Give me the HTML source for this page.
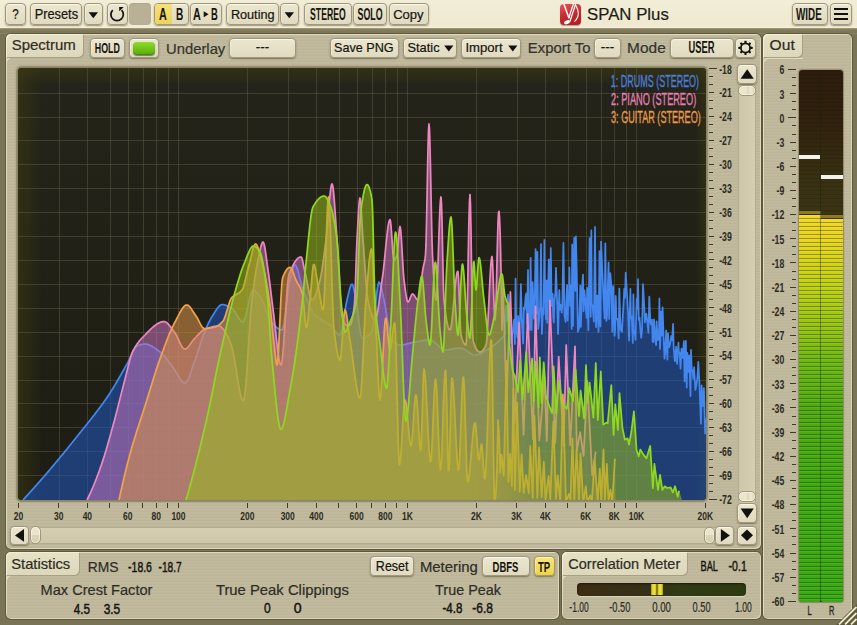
<!DOCTYPE html>
<html><head><meta charset="utf-8">
<style>
*{margin:0;padding:0;box-sizing:border-box}
html,body{width:857px;height:625px;overflow:hidden;background:#7a7456;font-family:"Liberation Sans",sans-serif;color:#1a1a14}
.a{position:absolute}
#top{left:0;top:0;width:857px;height:29px;background:linear-gradient(#f2edd6,#efe9d0 85%,#f6f1dc)}
#band{left:0;top:28px;width:857px;height:6px;background:linear-gradient(#a8a284,#857f5f 25%,#7b7555 70%,#8c8668)}
.b{position:absolute;border:1px solid #9f977b;border-radius:4px;background:linear-gradient(#ebe6ce,#e0dac0);box-shadow:0 1px 1.5px rgba(50,40,10,.45), inset 0 1px 0 rgba(255,255,250,.7), inset 1px 0 0 rgba(255,255,250,.35)}
.pb{position:absolute;border-radius:5px;background:#bfb89b}
.stripe{background-image:repeating-linear-gradient(0deg,rgba(255,255,245,.04) 0 1px,rgba(0,0,0,.015) 1px 2px,rgba(255,255,255,0) 2px 3px)}
.hl{position:absolute;border-radius:5px 5px 0 0;box-shadow:inset 1px 1px 0 #d9d2b6}
.tab{position:absolute;background:linear-gradient(#e6e0c5,#ddd7bb);border-radius:5px 0 5px 0;box-shadow:1px 1px 0 #a8a085, inset 1px 1px 0 #f3eed8}
.bd{position:absolute;background-color:#c4bc9f;border-radius:5px;box-shadow:inset 1px 1px 0 #e0dac0, inset -1px -1px 0 #ddd6bb, 0 -1px 0 #aaa286}
.tick{position:absolute;height:1px;background:#3e3b2e}
.vtick{position:absolute;width:1px;background:#3e3b2e}
.th{position:absolute;border-radius:5px;border:1px solid #9f977b;box-shadow:inset 0 0 0 1px rgba(255,255,245,.5)}
</style></head><body>
<div class="a" id="top"></div>
<div class="a" id="band"></div>
<div class="b" style="left:5px;top:3px;width:21px;height:22px"></div>
<div class="b" style="left:30px;top:3px;width:52px;height:22px"></div>
<div class="b" style="left:84px;top:3px;width:19px;height:22px"><svg width="17" height="20" style="position:absolute;left:0;top:0"><path d="M3.6 8.3h9.4l-4.7 5.9z" fill="#111"/></svg></div>
<div class="b" style="left:107px;top:3px;width:21px;height:22px"><svg width="19" height="20" style="position:absolute;left:0;top:0"><path d="M4.74 6.09 A6.2 6.2 0 1 0 13.6 6.2" fill="none" stroke="#111" stroke-width="1.7"/><path d="M11.1 3.1 L15.7 3.1 L11.3 7.3z" fill="#111"/></svg></div>
<div class="a" style="left:129px;top:3px;width:22px;height:22px;border-radius:4px;background:#b8b195;box-shadow:inset 0 1px 1px rgba(0,0,0,.06)"></div>
<div class="b" style="left:154px;top:3px;width:35px;height:22px;overflow:hidden"><div class="a" style="left:0;top:0;width:17px;height:20px;background:linear-gradient(#f5e07a,#edd45a)"></div></div>
<div class="b" style="left:190px;top:3px;width:32px;height:22px"></div>
<div class="b" style="left:226px;top:3px;width:53px;height:22px"></div>
<div class="b" style="left:280px;top:3px;width:19px;height:22px"><svg width="17" height="20" style="position:absolute;left:0;top:0"><path d="M3.6 8.3h9.4l-4.7 5.9z" fill="#111"/></svg></div>
<div class="b" style="left:304px;top:3px;width:48px;height:22px"></div>
<div class="b" style="left:353px;top:3px;width:34px;height:22px"></div>
<div class="b" style="left:389px;top:3px;width:40px;height:22px"></div>
<div class="a" style="left:560px;top:4px;width:21px;height:21px;border-radius:4px;background:linear-gradient(160deg,#e8545a,#c42a2e 50%,#b01c20);box-shadow:0 1px 1px rgba(0,0,0,.3)">
<svg width="21" height="21" style="position:absolute;left:0;top:0;overflow:hidden"><path d="M3.9 0 L8.9 14" stroke="#fff" stroke-width="1.5"/><path d="M13.3 0 L8.6 14.5" stroke="#fff" stroke-width="1.3"/><path d="M15.6 0 L9.9 17.5" stroke="#fff" stroke-width="1.2"/><ellipse cx="7" cy="18.2" rx="3.1" ry="1.9" transform="rotate(-22 7 18.2)" fill="#fff"/><path d="M15.5 0.8 C17.2 4 19.6 8.2 17.8 12.5 C17.2 14.5 15.8 16.4 14.4 17.6" stroke="#fff" stroke-width="1.1" fill="none"/></svg></div>
<div class="b" style="left:792px;top:3px;width:36px;height:22px"></div>
<div class="b" style="left:830px;top:3px;width:22px;height:22px"><div class="a" style="left:3px;top:4px;width:14px;height:2.2px;background:#111"></div><div class="a" style="left:3px;top:9px;width:14px;height:2.2px;background:#111"></div><div class="a" style="left:3px;top:14px;width:14px;height:2.2px;background:#111"></div></div>
<!-- spectrum panel -->
<div class="pb stripe" style="left:6px;top:34px;width:755px;height:515px;box-shadow:inset 1px 1px 0 #e0d9be, inset -1px -1px 0 #ddd6ba, 0 0 0 1px #5f5a3d"></div>
<div class="a" style="left:6px;top:57px;width:70px;height:14px;border-radius:5px 0 0 0;box-shadow:inset 1px 1px 0 #e4ddc2"></div>
<div class="tab" style="left:6px;top:34px;width:77px;height:23px"></div>
<div class="b" style="left:90px;top:38px;width:35px;height:20px"></div>
<div class="b" style="left:129px;top:38px;width:30px;height:20px"><div class="a" style="left:3px;top:2.5px;width:22px;height:13px;border-radius:4px;background:linear-gradient(#8edc2a,#6cc014 60%,#5aa80e);box-shadow:0 1px 1px rgba(0,0,0,.45), inset 0 -1px 1px rgba(0,0,0,.2)"></div></div>
<div class="b" style="left:229px;top:38px;width:67px;height:20px"></div>
<div class="b" style="left:330px;top:38px;width:69px;height:20px"></div>
<div class="b" style="left:403px;top:38px;width:54px;height:20px"><svg width="10" height="8" style="position:absolute;left:40px;top:6px"><path d="M0.2 0.5h9.2l-4.6 6z" fill="#111"/></svg></div>
<div class="b" style="left:461px;top:38px;width:60px;height:20px"><svg width="10" height="8" style="position:absolute;left:46px;top:6px"><path d="M0.2 0.5h9.2l-4.6 6z" fill="#111"/></svg></div>
<div class="b" style="left:594px;top:38px;width:27px;height:20px"></div>
<div class="b" style="left:670px;top:38px;width:64px;height:20px"></div>
<div class="b" style="left:735px;top:38px;width:21px;height:20px"><svg width="19" height="18" style="position:absolute;left:0;top:0"><g transform="translate(9.5 8.9)" fill="#111"><circle r="4.6" fill="none" stroke="#111" stroke-width="1.7"/><rect x="-1.05" y="-7.1" width="2.1" height="2.8" rx=".5" transform="rotate(0)"/><rect x="-1.05" y="-7.1" width="2.1" height="2.8" rx=".5" transform="rotate(45)"/><rect x="-1.05" y="-7.1" width="2.1" height="2.8" rx=".5" transform="rotate(90)"/><rect x="-1.05" y="-7.1" width="2.1" height="2.8" rx=".5" transform="rotate(135)"/><rect x="-1.05" y="-7.1" width="2.1" height="2.8" rx=".5" transform="rotate(180)"/><rect x="-1.05" y="-7.1" width="2.1" height="2.8" rx=".5" transform="rotate(225)"/><rect x="-1.05" y="-7.1" width="2.1" height="2.8" rx=".5" transform="rotate(270)"/><rect x="-1.05" y="-7.1" width="2.1" height="2.8" rx=".5" transform="rotate(315)"/></g></svg></div>

<!-- plot -->
<div class="a" style="left:17px;top:67px;width:690px;height:434px;border-radius:5px;background:#8a8466;box-shadow:0 0 1.5px 0.5px rgba(90,84,58,.5)"></div>
<div class="a" style="left:18px;top:68px;width:688px;height:432px;border-radius:4px;overflow:hidden;background:#2a281b">
<svg width="688" height="432" style="position:absolute;left:0;top:0">
<defs><linearGradient id="bg" x1="0" y1="0" x2="0" y2="1"><stop offset="0" stop-color="#25241a"/><stop offset="1" stop-color="#1e1d13"/></linearGradient><linearGradient id="bgx" x1="0" y1="0" x2="1" y2="0"><stop offset="0" stop-color="#3c3e12" stop-opacity=".5"/><stop offset=".035" stop-color="#3c3e12" stop-opacity="0"/></linearGradient></defs>
<rect width="688" height="432" fill="url(#bg)"/>
<rect width="688" height="432" fill="url(#bgx)"/>
<defs><linearGradient id="bgr" x1="0" y1="0" x2="1" y2="0"><stop offset=".985" stop-color="#3c3e12" stop-opacity="0"/><stop offset="1" stop-color="#3c3e12" stop-opacity=".45"/></linearGradient></defs><rect width="688" height="432" fill="url(#bgr)"/>
<defs><linearGradient id="bgy" x1="0" y1="0" x2="0" y2="1"><stop offset="0" stop-color="#3c3a12" stop-opacity=".6"/><stop offset=".04" stop-color="#3c3a12" stop-opacity="0"/></linearGradient></defs><rect width="688" height="432" fill="url(#bgy)"/>
<path d="M41.5 0V432 M69.5 0V432 M92.5 0V432 M110.5 0V432 M125.5 0V432 M138.5 0V432 M150.5 0V432 M160.5 0V432 M229.5 0V432 M270.5 0V432 M298.5 0V432 M321.5 0V432 M339.5 0V432 M354.5 0V432 M367.5 0V432 M379.5 0V432 M389.5 0V432 M458.5 0V432 M499.5 0V432 M527.5 0V432 M550.5 0V432 M568.5 0V432 M583.5 0V432 M596.5 0V432 M608.5 0V432 M618.5 0V432 M0 25.5H688 M0 49.5H688 M0 72.5H688 M0 96.5H688 M0 120.5H688 M0 144.5H688 M0 168.5H688 M0 192.5H688 M0 216.5H688 M0 240.5H688 M0 264.5H688 M0 288.5H688 M0 312.5H688 M0 335.5H688 M0 359.5H688 M0 383.5H688 M0 407.5H688" stroke="#5e5a45" stroke-width="1" fill="none" opacity=".5"/>
<defs><linearGradient id="pg" gradientUnits="userSpaceOnUse" x1="472" y1="0" x2="517" y2="0"><stop offset="0" stop-color="rgb(195,114,187)" stop-opacity=".55"/><stop offset="1" stop-color="rgb(195,114,187)" stop-opacity=".22"/></linearGradient><linearGradient id="og" gradientUnits="userSpaceOnUse" x1="452" y1="0" x2="512" y2="0"><stop offset="0" stop-color="rgb(220,148,74)" stop-opacity=".55"/><stop offset="1" stop-color="rgb(220,148,74)" stop-opacity=".28"/></linearGradient></defs><path d="M5.0 434.0 L5.0 432.0 L6.0 430.9 L7.0 429.8 L8.0 428.7 L9.0 427.6 L10.0 426.5 L11.0 425.4 L12.0 424.3 L13.0 423.2 L14.0 422.1 L15.0 421.0 L16.0 419.9 L17.0 418.7 L18.0 417.6 L19.0 416.5 L20.0 415.4 L21.0 414.2 L22.0 413.1 L23.0 411.9 L24.0 410.8 L25.0 409.6 L26.0 408.5 L27.0 407.3 L28.0 406.2 L29.0 405.0 L30.0 403.8 L31.0 402.7 L32.0 401.5 L33.0 400.3 L34.0 399.1 L35.0 397.9 L36.0 396.7 L37.0 395.5 L38.0 394.3 L39.0 393.1 L40.0 391.9 L41.0 390.7 L42.0 389.5 L43.0 388.3 L44.0 387.1 L45.0 385.9 L46.0 384.7 L47.0 383.4 L48.0 382.2 L49.0 381.0 L50.0 379.7 L51.0 378.5 L52.0 377.3 L53.0 376.0 L54.0 374.8 L55.0 373.5 L56.0 372.3 L57.0 371.0 L58.0 369.8 L59.0 368.5 L60.0 367.3 L61.0 366.0 L62.0 364.7 L63.0 363.5 L64.0 362.2 L65.0 361.0 L66.0 359.7 L67.0 358.5 L68.0 357.2 L69.0 356.0 L70.0 354.7 L71.0 353.5 L72.0 352.2 L73.0 351.0 L74.0 349.7 L75.0 348.4 L76.0 347.2 L77.0 345.9 L78.0 344.6 L79.0 343.3 L80.0 342.0 L81.0 340.6 L82.0 339.3 L83.0 337.9 L84.0 336.6 L85.0 335.2 L86.0 333.8 L87.0 332.4 L88.0 330.9 L89.0 329.5 L90.0 328.0 L91.0 326.5 L92.0 325.0 L93.0 323.4 L94.0 321.8 L95.0 320.2 L96.0 318.5 L97.0 316.9 L98.0 315.2 L99.0 313.5 L100.0 311.8 L101.0 310.0 L102.0 308.3 L103.0 306.5 L104.0 304.8 L105.0 303.0 L106.0 301.3 L107.0 299.5 L108.0 297.7 L109.0 296.0 L110.0 294.1 L111.0 292.0 L112.0 289.8 L113.0 287.6 L114.0 285.4 L115.0 283.3 L116.0 281.4 L117.0 279.9 L118.0 278.7 L119.0 278.0 L120.0 277.6 L121.0 277.2 L122.0 276.9 L123.0 276.6 L124.0 276.3 L125.0 276.2 L126.0 276.0 L127.0 276.0 L128.0 276.1 L129.0 276.2 L130.0 276.5 L131.0 276.8 L132.0 277.2 L133.0 277.7 L134.0 278.3 L135.0 278.9 L136.0 279.6 L137.0 280.3 L138.0 281.0 L139.0 281.7 L140.0 282.5 L141.0 283.3 L142.0 284.0 L143.0 284.8 L144.0 285.7 L145.0 286.7 L146.0 287.9 L147.0 289.0 L148.0 290.3 L149.0 291.5 L150.0 292.8 L151.0 294.2 L152.0 295.5 L153.0 296.7 L154.0 298.0 L155.0 299.3 L156.0 300.8 L157.0 302.5 L158.0 304.2 L159.0 305.9 L160.0 307.7 L161.0 309.3 L162.0 310.8 L163.0 312.2 L164.0 313.4 L165.0 314.2 L166.0 314.8 L167.0 315.0 L168.0 314.6 L169.0 313.4 L170.0 311.6 L171.0 309.4 L172.0 306.7 L173.0 303.8 L174.0 300.7 L175.0 297.7 L176.0 294.7 L177.0 292.0 L178.0 289.3 L179.0 286.5 L180.0 283.4 L181.0 280.4 L182.0 277.2 L183.0 274.1 L184.0 271.1 L185.0 268.2 L186.0 265.5 L187.0 263.0 L188.0 260.7 L189.0 258.4 L190.0 256.2 L191.0 254.1 L192.0 252.1 L193.0 250.3 L194.0 248.6 L195.0 247.0 L196.0 245.5 L197.0 243.9 L198.0 242.3 L199.0 240.8 L200.0 239.5 L201.0 238.3 L202.0 237.4 L203.0 236.8 L204.0 236.6 L205.0 236.7 L206.0 236.8 L207.0 237.1 L208.0 237.4 L209.0 237.8 L210.0 238.2 L211.0 238.7 L212.0 239.2 L213.0 239.7 L214.0 240.3 L215.0 241.3 L216.0 242.5 L217.0 244.0 L218.0 245.7 L219.0 247.4 L220.0 249.0 L221.0 250.6 L222.0 252.0 L223.0 253.0 L224.0 253.7 L225.0 254.0 L226.0 253.1 L227.0 250.7 L228.0 247.1 L229.0 242.7 L230.0 238.0 L231.0 233.3 L232.0 228.9 L233.0 225.3 L234.0 222.9 L235.0 222.0 L236.0 222.2 L237.0 222.7 L238.0 223.6 L239.0 224.6 L240.0 225.9 L241.0 227.3 L242.0 228.9 L243.0 230.4 L244.0 232.0 L245.0 233.9 L246.0 236.4 L247.0 239.2 L248.0 242.3 L249.0 245.2 L250.0 248.0 L251.0 250.3 L252.0 252.0 L253.0 253.3 L254.0 254.5 L255.0 255.7 L256.0 256.9 L257.0 258.0 L258.0 258.9 L259.0 259.8 L260.0 260.6 L261.0 261.2 L262.0 261.6 L263.0 261.9 L264.0 262.0 L265.0 260.3 L266.0 255.7 L267.0 249.0 L268.0 240.9 L269.0 232.4 L270.0 224.3 L271.0 217.2 L272.0 212.0 L273.0 207.9 L274.0 203.9 L275.0 200.4 L276.0 197.9 L277.0 197.0 L278.0 197.8 L279.0 200.0 L280.0 203.1 L281.0 207.0 L282.0 211.1 L283.0 215.2 L284.0 219.0 L285.0 222.0 L286.0 224.5 L287.0 227.1 L288.0 229.6 L289.0 232.1 L290.0 234.5 L291.0 236.8 L292.0 238.9 L293.0 240.9 L294.0 242.8 L295.0 244.4 L296.0 245.8 L297.0 247.0 L298.0 248.0 L299.0 248.8 L300.0 249.6 L301.0 250.3 L302.0 251.0 L303.0 251.6 L304.0 252.1 L305.0 252.7 L306.0 253.2 L307.0 253.7 L308.0 254.3 L309.0 254.9 L310.0 255.5 L311.0 256.2 L312.0 257.0 L313.0 257.9 L314.0 259.1 L315.0 260.4 L316.0 261.7 L317.0 263.0 L318.0 264.3 L319.0 265.4 L320.0 266.2 L321.0 266.8 L322.0 267.0 L323.0 265.5 L324.0 261.6 L325.0 256.1 L326.0 249.6 L327.0 242.9 L328.0 236.8 L329.0 232.0 L330.0 227.9 L331.0 223.6 L332.0 219.8 L333.0 217.0 L334.0 216.0 L335.0 217.6 L336.0 221.6 L337.0 226.8 L338.0 232.0 L339.0 238.2 L340.0 246.1 L341.0 254.6 L342.0 262.3 L343.0 267.9 L344.0 270.0 L345.0 269.9 L346.0 269.7 L347.0 269.4 L348.0 269.0 L349.0 268.5 L350.0 267.8 L351.0 267.0 L352.0 266.1 L353.0 265.1 L354.0 264.0 L355.0 260.4 L356.0 252.9 L357.0 243.2 L358.0 232.8 L359.0 223.4 L360.0 216.6 L361.0 214.0 L362.0 215.2 L363.0 218.4 L364.0 222.7 L365.0 227.5 L366.0 232.0 L367.0 236.8 L368.0 242.5 L369.0 248.7 L370.0 255.0 L371.0 260.9 L372.0 266.1 L373.0 269.9 L374.0 272.0 L375.0 273.1 L376.0 274.0 L377.0 274.9 L378.0 275.6 L379.0 276.2 L380.0 276.6 L381.0 276.9 L382.0 277.0 L383.0 277.0 L384.0 276.9 L385.0 276.8 L386.0 276.6 L387.0 276.4 L388.0 276.2 L389.0 275.9 L390.0 275.7 L391.0 275.4 L392.0 275.1 L393.0 274.9 L394.0 274.6 L395.0 274.4 L396.0 274.2 L397.0 274.0 L398.0 273.8 L399.0 273.7 L400.0 273.5 L401.0 273.3 L402.0 273.1 L403.0 273.0 L404.0 272.8 L405.0 272.6 L406.0 272.5 L407.0 272.3 L408.0 272.2 L409.0 272.1 L410.0 272.1 L411.0 272.0 L412.0 272.0 L413.0 272.1 L414.0 272.5 L415.0 273.0 L416.0 273.8 L417.0 274.6 L418.0 275.5 L419.0 276.5 L420.0 277.5 L421.0 278.5 L422.0 279.4 L423.0 280.2 L424.0 281.0 L425.0 281.5 L426.0 281.9 L427.0 282.0 L428.0 282.0 L429.0 281.9 L430.0 281.8 L431.0 281.6 L432.0 281.5 L433.0 281.3 L434.0 281.1 L435.0 280.9 L436.0 280.7 L437.0 280.5 L438.0 280.4 L439.0 280.2 L440.0 280.1 L441.0 280.0 L442.0 280.0 L443.0 280.1 L444.0 280.3 L445.0 280.7 L446.0 281.2 L447.0 281.8 L448.0 282.5 L449.0 283.2 L450.0 283.8 L451.0 284.5 L452.0 285.2 L453.0 285.8 L454.0 286.3 L455.0 286.7 L456.0 286.9 L457.0 287.0 L458.0 286.9 L459.0 286.8 L460.0 286.6 L461.0 286.2 L462.0 285.9 L463.0 285.4 L464.0 284.9 L465.0 284.3 L466.0 283.8 L467.0 283.1 L468.0 282.5 L469.0 281.9 L470.0 281.2 L471.0 280.6 L472.0 280.0 L473.0 279.4 L474.0 278.7 L475.0 278.0 L476.0 277.3 L477.0 276.5 L478.0 275.7 L479.0 274.8 L480.0 273.9 L481.0 273.0 L482.0 272.0 L483.0 271.0 L484.0 269.9 L485.0 268.7 L486.0 267.5 L487.0 266.2 L488.0 237.5 L488.7 253.0 L490.0 226.7 L490.8 257.4 L492.0 236.2 L493.1 275.4 L493.8 268.5 L495.0 262.6 L496.1 251.6 L496.9 276.0 L497.6 210.5 L498.3 262.9 L499.5 269.6 L500.1 248.0 L501.3 273.2 L502.4 237.3 L502.9 216.2 L503.8 252.3 L505.2 275.6 L505.8 239.7 L506.6 241.0 L507.6 228.2 L508.3 225.3 L509.0 255.5 L510.0 201.9 L510.5 238.9 L511.4 252.8 L512.0 261.9 L512.6 189.9 L513.6 261.9 L514.6 214.1 L515.1 228.4 L515.9 250.7 L516.5 247.2 L517.6 181.2 L518.9 245.7 L519.4 183.9 L520.2 261.0 L521.4 249.6 L522.1 238.4 L523.0 176.1 L523.9 265.9 L525.0 240.1 L525.6 246.5 L526.4 172.0 L527.0 220.5 L528.0 250.9 L528.6 212.3 L529.2 254.8 L529.9 231.9 L530.8 191.4 L532.1 255.1 L532.8 180.0 L533.5 229.4 L534.0 238.2 L534.6 225.7 L535.2 248.0 L535.8 254.6 L536.3 232.6 L537.3 225.3 L538.0 199.9 L539.3 238.6 L540.1 266.0 L541.3 222.2 L541.8 241.8 L543.0 237.0 L543.7 244.7 L544.3 237.0 L545.4 174.9 L546.5 247.6 L547.6 253.9 L548.6 226.2 L549.1 217.1 L549.7 252.5 L550.4 225.2 L551.0 226.8 L551.4 199.5 L552.1 237.8 L552.8 217.6 L553.7 261.0 L554.2 176.5 L555.0 257.8 L556.2 169.9 L557.4 222.8 L557.9 168.4 L558.9 210.3 L559.9 263.8 L561.2 259.4 L562.3 217.6 L562.9 258.8 L564.0 220.7 L565.0 206.7 L565.6 243.3 L566.4 222.4 L567.7 237.3 L568.6 249.8 L569.2 219.8 L570.4 262.3 L571.6 170.1 L572.7 248.8 L573.3 162.3 L573.8 236.6 L574.5 237.2 L575.9 253.7 L577.0 158.9 L578.0 259.1 L579.2 227.6 L580.5 264.0 L581.5 183.1 L582.4 258.4 L583.1 173.6 L584.4 204.7 L585.5 228.5 L586.6 250.5 L587.3 175.3 L588.4 252.9 L589.0 248.7 L589.9 215.7 L590.6 194.5 L591.2 250.9 L592.3 205.1 L593.5 219.3 L594.3 263.9 L595.3 218.2 L596.5 267.8 L597.1 262.1 L597.8 228.0 L598.3 251.4 L599.6 250.9 L600.7 270.5 L601.3 220.5 L602.6 261.8 L603.9 263.9 L605.1 243.5 L606.3 220.9 L607.0 229.8 L607.7 204.6 L609.1 227.8 L610.0 243.8 L611.1 272.6 L612.4 220.8 L612.9 250.0 L613.7 248.3 L614.8 275.0 L615.4 226.3 L616.0 264.1 L616.9 265.3 L617.5 272.0 L618.7 230.6 L619.4 241.1 L620.0 211.2 L620.8 251.9 L621.6 249.8 L622.3 260.8 L623.2 269.8 L624.0 262.1 L625.0 216.1 L626.2 237.4 L627.0 254.3 L628.3 245.6 L629.6 255.8 L630.4 264.9 L631.3 228.6 L632.4 254.4 L633.1 256.7 L634.0 251.6 L634.6 273.8 L635.2 274.0 L636.0 251.4 L637.3 273.1 L638.1 277.1 L638.6 253.4 L639.7 272.1 L640.9 271.0 L641.4 230.5 L642.0 280.9 L643.2 243.6 L643.7 267.7 L644.6 239.3 L645.6 269.2 L646.5 290.6 L647.2 283.6 L648.2 262.5 L649.4 291.6 L650.0 265.3 L650.5 275.0 L651.2 279.2 L652.2 275.3 L653.2 268.2 L654.1 272.1 L655.1 255.8 L655.7 280.8 L656.8 293.2 L658.1 278.6 L658.7 293.9 L659.2 295.9 L660.4 274.7 L660.9 284.8 L661.7 284.4 L662.5 300.6 L663.5 280.6 L664.7 290.0 L665.9 273.1 L666.6 313.4 L667.9 272.9 L668.7 319.5 L669.3 284.9 L670.4 303.9 L671.3 287.4 L672.5 328.0 L673.0 281.8 L673.7 301.1 L674.8 304.2 L675.3 310.9 L676.1 299.2 L677.4 322.0 L678.3 317.4 L679.3 310.7 L680.3 293.8 L681.5 316.8 L682.2 336.4 L683.0 355.7 L683.6 317.4 L684.7 338.2 L685.9 320.2 L687.1 365.5 L687.7 351.1 L688.0 357.0 L688.0 434.0 Z" fill="rgb(32,84,180)" fill-opacity="0.6"/><path d="M5.0 432.0 L5.0 432.0 L6.0 430.9 L7.0 429.8 L8.0 428.7 L9.0 427.6 L10.0 426.5 L11.0 425.4 L12.0 424.3 L13.0 423.2 L14.0 422.1 L15.0 421.0 L16.0 419.9 L17.0 418.7 L18.0 417.6 L19.0 416.5 L20.0 415.4 L21.0 414.2 L22.0 413.1 L23.0 411.9 L24.0 410.8 L25.0 409.6 L26.0 408.5 L27.0 407.3 L28.0 406.2 L29.0 405.0 L30.0 403.8 L31.0 402.7 L32.0 401.5 L33.0 400.3 L34.0 399.1 L35.0 397.9 L36.0 396.7 L37.0 395.5 L38.0 394.3 L39.0 393.1 L40.0 391.9 L41.0 390.7 L42.0 389.5 L43.0 388.3 L44.0 387.1 L45.0 385.9 L46.0 384.7 L47.0 383.4 L48.0 382.2 L49.0 381.0 L50.0 379.7 L51.0 378.5 L52.0 377.3 L53.0 376.0 L54.0 374.8 L55.0 373.5 L56.0 372.3 L57.0 371.0 L58.0 369.8 L59.0 368.5 L60.0 367.3 L61.0 366.0 L62.0 364.7 L63.0 363.5 L64.0 362.2 L65.0 361.0 L66.0 359.7 L67.0 358.5 L68.0 357.2 L69.0 356.0 L70.0 354.7 L71.0 353.5 L72.0 352.2 L73.0 351.0 L74.0 349.7 L75.0 348.4 L76.0 347.2 L77.0 345.9 L78.0 344.6 L79.0 343.3 L80.0 342.0 L81.0 340.6 L82.0 339.3 L83.0 337.9 L84.0 336.6 L85.0 335.2 L86.0 333.8 L87.0 332.4 L88.0 330.9 L89.0 329.5 L90.0 328.0 L91.0 326.5 L92.0 325.0 L93.0 323.4 L94.0 321.8 L95.0 320.2 L96.0 318.5 L97.0 316.9 L98.0 315.2 L99.0 313.5 L100.0 311.8 L101.0 310.0 L102.0 308.3 L103.0 306.5 L104.0 304.8 L105.0 303.0 L106.0 301.3 L107.0 299.5 L108.0 297.7 L109.0 296.0 L110.0 294.1 L111.0 292.0 L112.0 289.8 L113.0 287.6 L114.0 285.4 L115.0 283.3 L116.0 281.4 L117.0 279.9 L118.0 278.7 L119.0 278.0 L120.0 277.6 L121.0 277.2 L122.0 276.9 L123.0 276.6 L124.0 276.3 L125.0 276.2 L126.0 276.0 L127.0 276.0 L128.0 276.1 L129.0 276.2 L130.0 276.5 L131.0 276.8 L132.0 277.2 L133.0 277.7 L134.0 278.3 L135.0 278.9 L136.0 279.6 L137.0 280.3 L138.0 281.0 L139.0 281.7 L140.0 282.5 L141.0 283.3 L142.0 284.0 L143.0 284.8 L144.0 285.7 L145.0 286.7 L146.0 287.9 L147.0 289.0 L148.0 290.3 L149.0 291.5 L150.0 292.8 L151.0 294.2 L152.0 295.5 L153.0 296.7 L154.0 298.0 L155.0 299.3 L156.0 300.8 L157.0 302.5 L158.0 304.2 L159.0 305.9 L160.0 307.7 L161.0 309.3 L162.0 310.8 L163.0 312.2 L164.0 313.4 L165.0 314.2 L166.0 314.8 L167.0 315.0 L168.0 314.6 L169.0 313.4 L170.0 311.6 L171.0 309.4 L172.0 306.7 L173.0 303.8 L174.0 300.7 L175.0 297.7 L176.0 294.7 L177.0 292.0 L178.0 289.3 L179.0 286.5 L180.0 283.4 L181.0 280.4 L182.0 277.2 L183.0 274.1 L184.0 271.1 L185.0 268.2 L186.0 265.5 L187.0 263.0 L188.0 260.7 L189.0 258.4 L190.0 256.2 L191.0 254.1 L192.0 252.1 L193.0 250.3 L194.0 248.6 L195.0 247.0 L196.0 245.5 L197.0 243.9 L198.0 242.3 L199.0 240.8 L200.0 239.5 L201.0 238.3 L202.0 237.4 L203.0 236.8 L204.0 236.6 L205.0 236.7 L206.0 236.8 L207.0 237.1 L208.0 237.4 L209.0 237.8 L210.0 238.2 L211.0 238.7 L212.0 239.2 L213.0 239.7 L214.0 240.3 L215.0 241.3 L216.0 242.5 L217.0 244.0 L218.0 245.7 L219.0 247.4 L220.0 249.0 L221.0 250.6 L222.0 252.0 L223.0 253.0 L224.0 253.7 L225.0 254.0 L226.0 253.1 L227.0 250.7 L228.0 247.1 L229.0 242.7 L230.0 238.0 L231.0 233.3 L232.0 228.9 L233.0 225.3 L234.0 222.9 L235.0 222.0 L236.0 222.2 L237.0 222.7 L238.0 223.6 L239.0 224.6 L240.0 225.9 L241.0 227.3 L242.0 228.9 L243.0 230.4 L244.0 232.0 L245.0 233.9 L246.0 236.4 L247.0 239.2 L248.0 242.3 L249.0 245.2 L250.0 248.0 L251.0 250.3 L252.0 252.0 L253.0 253.3 L254.0 254.5 L255.0 255.7 L256.0 256.9 L257.0 258.0 L258.0 258.9 L259.0 259.8 L260.0 260.6 L261.0 261.2 L262.0 261.6 L263.0 261.9 L264.0 262.0 L265.0 260.3 L266.0 255.7 L267.0 249.0 L268.0 240.9 L269.0 232.4 L270.0 224.3 L271.0 217.2 L272.0 212.0 L273.0 207.9 L274.0 203.9 L275.0 200.4 L276.0 197.9 L277.0 197.0 L278.0 197.8 L279.0 200.0 L280.0 203.1 L281.0 207.0 L282.0 211.1 L283.0 215.2 L284.0 219.0 L285.0 222.0 L286.0 224.5 L287.0 227.1 L288.0 229.6 L289.0 232.1 L290.0 234.5 L291.0 236.8 L292.0 238.9 L293.0 240.9 L294.0 242.8 L295.0 244.4 L296.0 245.8 L297.0 247.0 L298.0 248.0 L299.0 248.8 L300.0 249.6 L301.0 250.3 L302.0 251.0 L303.0 251.6 L304.0 252.1 L305.0 252.7 L306.0 253.2 L307.0 253.7 L308.0 254.3 L309.0 254.9 L310.0 255.5 L311.0 256.2 L312.0 257.0 L313.0 257.9 L314.0 259.1 L315.0 260.4 L316.0 261.7 L317.0 263.0 L318.0 264.3 L319.0 265.4 L320.0 266.2 L321.0 266.8 L322.0 267.0 L323.0 265.5 L324.0 261.6 L325.0 256.1 L326.0 249.6 L327.0 242.9 L328.0 236.8 L329.0 232.0 L330.0 227.9 L331.0 223.6 L332.0 219.8 L333.0 217.0 L334.0 216.0 L335.0 217.6 L336.0 221.6 L337.0 226.8 L338.0 232.0 L339.0 238.2 L340.0 246.1 L341.0 254.6 L342.0 262.3 L343.0 267.9 L344.0 270.0 L345.0 269.9 L346.0 269.7 L347.0 269.4 L348.0 269.0 L349.0 268.5 L350.0 267.8 L351.0 267.0 L352.0 266.1 L353.0 265.1 L354.0 264.0 L355.0 260.4 L356.0 252.9 L357.0 243.2 L358.0 232.8 L359.0 223.4 L360.0 216.6 L361.0 214.0 L362.0 215.2 L363.0 218.4 L364.0 222.7 L365.0 227.5 L366.0 232.0 L367.0 236.8 L368.0 242.5 L369.0 248.7 L370.0 255.0 L371.0 260.9 L372.0 266.1 L373.0 269.9 L374.0 272.0 L375.0 273.1 L376.0 274.0 L377.0 274.9 L378.0 275.6 L379.0 276.2 L380.0 276.6 L381.0 276.9 L382.0 277.0 L383.0 277.0 L384.0 276.9 L385.0 276.8 L386.0 276.6 L387.0 276.4 L388.0 276.2 L389.0 275.9 L390.0 275.7 L391.0 275.4 L392.0 275.1 L393.0 274.9 L394.0 274.6 L395.0 274.4 L396.0 274.2 L397.0 274.0 L398.0 273.8 L399.0 273.7 L400.0 273.5 L401.0 273.3 L402.0 273.1 L403.0 273.0 L404.0 272.8 L405.0 272.6 L406.0 272.5 L407.0 272.3 L408.0 272.2 L409.0 272.1 L410.0 272.1 L411.0 272.0 L412.0 272.0 L413.0 272.1 L414.0 272.5 L415.0 273.0 L416.0 273.8 L417.0 274.6 L418.0 275.5 L419.0 276.5 L420.0 277.5 L421.0 278.5 L422.0 279.4 L423.0 280.2 L424.0 281.0 L425.0 281.5 L426.0 281.9 L427.0 282.0 L428.0 282.0 L429.0 281.9 L430.0 281.8 L431.0 281.6 L432.0 281.5 L433.0 281.3 L434.0 281.1 L435.0 280.9 L436.0 280.7 L437.0 280.5 L438.0 280.4 L439.0 280.2 L440.0 280.1 L441.0 280.0 L442.0 280.0 L443.0 280.1 L444.0 280.3 L445.0 280.7 L446.0 281.2 L447.0 281.8 L448.0 282.5 L449.0 283.2 L450.0 283.8 L451.0 284.5 L452.0 285.2 L453.0 285.8 L454.0 286.3 L455.0 286.7 L456.0 286.9 L457.0 287.0 L458.0 286.9 L459.0 286.8 L460.0 286.6 L461.0 286.2 L462.0 285.9 L463.0 285.4 L464.0 284.9 L465.0 284.3 L466.0 283.8 L467.0 283.1 L468.0 282.5 L469.0 281.9 L470.0 281.2 L471.0 280.6 L472.0 280.0 L473.0 279.4 L474.0 278.7 L475.0 278.0 L476.0 277.3 L477.0 276.5 L478.0 275.7 L479.0 274.8 L480.0 273.9 L481.0 273.0 L482.0 272.0 L483.0 271.0 L484.0 269.9 L485.0 268.7 L486.0 267.5 L487.0 266.2 L488.0 237.5 L488.7 253.0 L490.0 226.7 L490.8 257.4 L492.0 236.2 L493.1 275.4 L493.8 268.5 L495.0 262.6 L496.1 251.6 L496.9 276.0 L497.6 210.5 L498.3 262.9 L499.5 269.6 L500.1 248.0 L501.3 273.2 L502.4 237.3 L502.9 216.2 L503.8 252.3 L505.2 275.6 L505.8 239.7 L506.6 241.0 L507.6 228.2 L508.3 225.3 L509.0 255.5 L510.0 201.9 L510.5 238.9 L511.4 252.8 L512.0 261.9 L512.6 189.9 L513.6 261.9 L514.6 214.1 L515.1 228.4 L515.9 250.7 L516.5 247.2 L517.6 181.2 L518.9 245.7 L519.4 183.9 L520.2 261.0 L521.4 249.6 L522.1 238.4 L523.0 176.1 L523.9 265.9 L525.0 240.1 L525.6 246.5 L526.4 172.0 L527.0 220.5 L528.0 250.9 L528.6 212.3 L529.2 254.8 L529.9 231.9 L530.8 191.4 L532.1 255.1 L532.8 180.0 L533.5 229.4 L534.0 238.2 L534.6 225.7 L535.2 248.0 L535.8 254.6 L536.3 232.6 L537.3 225.3 L538.0 199.9 L539.3 238.6 L540.1 266.0 L541.3 222.2 L541.8 241.8 L543.0 237.0 L543.7 244.7 L544.3 237.0 L545.4 174.9 L546.5 247.6 L547.6 253.9 L548.6 226.2 L549.1 217.1 L549.7 252.5 L550.4 225.2 L551.0 226.8 L551.4 199.5 L552.1 237.8 L552.8 217.6 L553.7 261.0 L554.2 176.5 L555.0 257.8 L556.2 169.9 L557.4 222.8 L557.9 168.4 L558.9 210.3 L559.9 263.8 L561.2 259.4 L562.3 217.6 L562.9 258.8 L564.0 220.7 L565.0 206.7 L565.6 243.3 L566.4 222.4 L567.7 237.3 L568.6 249.8 L569.2 219.8 L570.4 262.3 L571.6 170.1 L572.7 248.8 L573.3 162.3 L573.8 236.6 L574.5 237.2 L575.9 253.7 L577.0 158.9 L578.0 259.1 L579.2 227.6 L580.5 264.0 L581.5 183.1 L582.4 258.4 L583.1 173.6 L584.4 204.7 L585.5 228.5 L586.6 250.5 L587.3 175.3 L588.4 252.9 L589.0 248.7 L589.9 215.7 L590.6 194.5 L591.2 250.9 L592.3 205.1 L593.5 219.3 L594.3 263.9 L595.3 218.2 L596.5 267.8 L597.1 262.1 L597.8 228.0 L598.3 251.4 L599.6 250.9 L600.7 270.5 L601.3 220.5 L602.6 261.8 L603.9 263.9 L605.1 243.5 L606.3 220.9 L607.0 229.8 L607.7 204.6 L609.1 227.8 L610.0 243.8 L611.1 272.6 L612.4 220.8 L612.9 250.0 L613.7 248.3 L614.8 275.0 L615.4 226.3 L616.0 264.1 L616.9 265.3 L617.5 272.0 L618.7 230.6 L619.4 241.1 L620.0 211.2 L620.8 251.9 L621.6 249.8 L622.3 260.8 L623.2 269.8 L624.0 262.1 L625.0 216.1 L626.2 237.4 L627.0 254.3 L628.3 245.6 L629.6 255.8 L630.4 264.9 L631.3 228.6 L632.4 254.4 L633.1 256.7 L634.0 251.6 L634.6 273.8 L635.2 274.0 L636.0 251.4 L637.3 273.1 L638.1 277.1 L638.6 253.4 L639.7 272.1 L640.9 271.0 L641.4 230.5 L642.0 280.9 L643.2 243.6 L643.7 267.7 L644.6 239.3 L645.6 269.2 L646.5 290.6 L647.2 283.6 L648.2 262.5 L649.4 291.6 L650.0 265.3 L650.5 275.0 L651.2 279.2 L652.2 275.3 L653.2 268.2 L654.1 272.1 L655.1 255.8 L655.7 280.8 L656.8 293.2 L658.1 278.6 L658.7 293.9 L659.2 295.9 L660.4 274.7 L660.9 284.8 L661.7 284.4 L662.5 300.6 L663.5 280.6 L664.7 290.0 L665.9 273.1 L666.6 313.4 L667.9 272.9 L668.7 319.5 L669.3 284.9 L670.4 303.9 L671.3 287.4 L672.5 328.0 L673.0 281.8 L673.7 301.1 L674.8 304.2 L675.3 310.9 L676.1 299.2 L677.4 322.0 L678.3 317.4 L679.3 310.7 L680.3 293.8 L681.5 316.8 L682.2 336.4 L683.0 355.7 L683.6 317.4 L684.7 338.2 L685.9 320.2 L687.1 365.5 L687.7 351.1 L688.0 357.0" fill="none" stroke="#4286ee" stroke-width="1.75" stroke-linejoin="round"/>
<path d="M69.0 434.0 L69.0 432.0 L69.5 431.0 L70.0 430.0 L70.5 429.0 L71.0 428.0 L71.5 426.9 L72.0 425.8 L72.5 424.7 L73.0 423.6 L73.5 422.5 L74.0 421.3 L74.5 420.2 L75.0 419.0 L75.5 417.8 L76.0 416.6 L76.5 415.3 L77.0 414.1 L77.5 412.8 L78.0 411.5 L78.5 410.3 L79.0 408.9 L79.5 407.6 L80.0 406.3 L80.5 404.9 L81.0 403.6 L81.5 402.2 L82.0 400.8 L82.5 399.4 L83.0 398.0 L83.5 396.6 L84.0 395.1 L84.5 393.6 L85.0 392.1 L85.5 390.5 L86.0 389.0 L86.5 387.4 L87.0 385.7 L87.5 384.1 L88.0 382.4 L88.5 380.7 L89.0 379.0 L89.5 377.3 L90.0 375.6 L90.5 373.8 L91.0 372.0 L91.5 370.3 L92.0 368.5 L92.5 366.7 L93.0 364.9 L93.5 363.1 L94.0 361.3 L94.5 359.5 L95.0 357.6 L95.5 355.8 L96.0 354.0 L96.5 352.2 L97.0 350.3 L97.5 348.4 L98.0 346.5 L98.5 344.5 L99.0 342.6 L99.5 340.6 L100.0 338.6 L100.5 336.6 L101.0 334.6 L101.5 332.6 L102.0 330.6 L102.5 328.6 L103.0 326.6 L103.5 324.6 L104.0 322.7 L104.5 320.7 L105.0 318.8 L105.5 316.9 L106.0 315.0 L106.5 313.1 L107.0 311.2 L107.5 309.2 L108.0 307.2 L108.5 305.1 L109.0 303.1 L109.5 301.1 L110.0 299.1 L110.5 297.1 L111.0 295.2 L111.5 293.3 L112.0 291.5 L112.5 289.8 L113.0 288.2 L113.5 286.7 L114.0 285.3 L114.5 284.1 L115.0 283.0 L115.5 282.0 L116.0 281.1 L116.5 280.1 L117.0 279.3 L117.5 278.4 L118.0 277.6 L118.5 276.9 L119.0 276.1 L119.5 275.4 L120.0 274.7 L120.5 274.1 L121.0 273.4 L121.5 272.8 L122.0 272.2 L122.5 271.6 L123.0 271.1 L123.5 270.5 L124.0 270.0 L124.5 269.5 L125.0 269.0 L125.5 268.5 L126.0 268.0 L126.5 267.5 L127.0 267.0 L127.5 266.5 L128.0 265.9 L128.5 265.4 L129.0 264.9 L129.5 264.4 L130.0 263.9 L130.5 263.4 L131.0 262.9 L131.5 262.4 L132.0 261.9 L132.5 261.4 L133.0 260.9 L133.5 260.5 L134.0 260.0 L134.5 259.5 L135.0 259.1 L135.5 258.7 L136.0 258.3 L136.5 257.9 L137.0 257.5 L137.5 257.1 L138.0 256.7 L138.5 256.4 L139.0 256.0 L139.5 255.7 L140.0 255.4 L140.5 255.2 L141.0 254.9 L141.5 254.7 L142.0 254.4 L142.5 254.3 L143.0 254.1 L143.5 253.9 L144.0 253.8 L144.5 253.7 L145.0 253.7 L145.5 253.6 L146.0 253.6 L146.5 253.6 L147.0 253.8 L147.5 254.0 L148.0 254.2 L148.5 254.5 L149.0 254.9 L149.5 255.4 L150.0 255.8 L150.5 256.4 L151.0 256.9 L151.5 257.5 L152.0 258.2 L152.5 258.8 L153.0 259.5 L153.5 260.2 L154.0 260.9 L154.5 261.6 L155.0 262.3 L155.5 263.0 L156.0 263.7 L156.5 264.3 L157.0 265.0 L157.5 265.7 L158.0 266.5 L158.5 267.4 L159.0 268.4 L159.5 269.4 L160.0 270.5 L160.5 271.6 L161.0 272.7 L161.5 273.8 L162.0 274.9 L162.5 275.9 L163.0 276.9 L163.5 277.8 L164.0 278.7 L164.5 279.4 L165.0 280.0 L165.5 280.5 L166.0 280.8 L166.5 281.0 L167.0 281.0 L167.5 280.9 L168.0 280.7 L168.5 280.4 L169.0 280.0 L169.5 279.5 L170.0 279.0 L170.5 278.5 L171.0 277.9 L171.5 277.2 L172.0 276.6 L172.5 275.9 L173.0 275.2 L173.5 274.4 L174.0 273.7 L174.5 273.0 L175.0 272.4 L175.5 271.7 L176.0 271.1 L176.5 270.5 L177.0 270.0 L177.5 269.5 L178.0 269.0 L178.5 268.5 L179.0 267.9 L179.5 267.4 L180.0 266.9 L180.5 266.3 L181.0 265.8 L181.5 265.3 L182.0 264.8 L182.5 264.3 L183.0 263.8 L183.5 263.4 L184.0 263.0 L184.5 262.6 L185.0 262.2 L185.5 261.9 L186.0 261.7 L186.5 261.5 L187.0 261.3 L187.5 261.1 L188.0 260.9 L188.5 260.7 L189.0 260.5 L189.5 260.3 L190.0 260.2 L190.5 260.0 L191.0 259.8 L191.5 259.7 L192.0 259.5 L192.5 259.4 L193.0 259.2 L193.5 259.1 L194.0 259.0 L194.5 258.8 L195.0 258.7 L195.5 258.6 L196.0 258.5 L196.5 258.4 L197.0 258.3 L197.5 258.3 L198.0 258.2 L198.5 258.1 L199.0 258.1 L199.5 258.0 L200.0 258.0 L200.5 258.0 L201.0 258.0 L201.5 258.1 L202.0 258.2 L202.5 258.5 L203.0 258.9 L203.5 259.3 L204.0 259.8 L204.5 260.3 L205.0 260.9 L205.5 261.4 L206.0 262.0 L206.5 262.6 L207.0 263.3 L207.5 264.1 L208.0 264.9 L208.5 265.8 L209.0 266.8 L209.5 267.8 L210.0 268.9 L210.5 270.1 L211.0 271.3 L211.5 272.6 L212.0 273.9 L212.5 275.2 L213.0 276.6 L213.5 278.0 L214.0 279.6 L214.5 281.5 L215.0 283.7 L215.5 286.1 L216.0 288.8 L216.5 291.6 L217.0 294.6 L217.5 297.7 L218.0 300.8 L218.5 304.0 L219.0 307.2 L219.5 310.3 L220.0 313.4 L220.5 316.4 L221.0 319.2 L221.5 321.9 L222.0 324.4 L222.5 326.6 L223.0 328.6 L223.5 330.2 L224.0 331.5 L224.5 332.4 L225.0 332.9 L225.5 332.9 L226.0 331.6 L226.5 329.0 L227.0 325.2 L227.5 320.4 L228.0 314.7 L228.5 308.3 L229.0 301.3 L229.5 293.8 L230.0 286.1 L230.5 278.3 L231.0 270.5 L231.5 262.8 L232.0 255.4 L232.5 248.5 L233.0 242.2 L233.5 236.7 L234.0 232.0 L234.5 227.9 L235.0 223.9 L235.5 220.0 L236.0 216.3 L236.5 212.7 L237.0 209.2 L237.5 205.9 L238.0 202.8 L238.5 199.8 L239.0 197.0 L239.5 194.4 L240.0 192.0 L240.5 189.6 L241.0 187.2 L241.5 184.7 L242.0 182.3 L242.5 180.1 L243.0 178.1 L243.5 176.4 L244.0 175.1 L244.5 174.3 L245.0 174.0 L245.5 174.5 L246.0 175.9 L246.5 178.0 L247.0 180.7 L247.5 183.9 L248.0 187.5 L248.5 191.2 L249.0 194.9 L249.5 198.6 L250.0 202.0 L250.5 205.4 L251.0 209.0 L251.5 212.9 L252.0 216.9 L252.5 220.9 L253.0 225.1 L253.5 229.2 L254.0 233.2 L254.5 237.2 L255.0 241.0 L255.5 244.9 L256.0 249.1 L256.5 253.5 L257.0 258.1 L257.5 262.7 L258.0 267.4 L258.5 272.0 L259.0 276.4 L259.5 280.6 L260.0 284.5 L260.5 288.0 L261.0 291.0 L261.5 293.5 L262.0 295.4 L262.5 296.6 L263.0 297.0 L263.5 296.1 L264.0 293.4 L264.5 289.3 L265.0 284.0 L265.5 277.6 L266.0 270.5 L266.5 262.8 L267.0 254.8 L267.5 246.7 L268.0 238.7 L268.5 231.2 L269.0 224.2 L269.5 218.1 L270.0 213.0 L270.5 209.2 L271.0 207.0 L271.5 205.6 L272.0 204.3 L272.5 203.0 L273.0 201.8 L273.5 200.6 L274.0 199.5 L274.5 198.4 L275.0 197.4 L275.5 196.4 L276.0 195.5 L276.5 194.6 L277.0 193.8 L277.5 193.1 L278.0 192.4 L278.5 191.8 L279.0 191.2 L279.5 190.7 L280.0 190.2 L280.5 189.9 L281.0 189.6 L281.5 189.3 L282.0 189.1 L282.5 189.0 L283.0 189.0 L283.5 189.4 L284.0 190.6 L284.5 192.4 L285.0 194.6 L285.5 197.0 L286.0 199.5 L286.5 201.9 L287.0 204.0 L287.5 206.1 L288.0 208.4 L288.5 210.9 L289.0 213.5 L289.5 216.2 L290.0 218.8 L290.5 221.4 L291.0 223.8 L291.5 226.1 L292.0 228.0 L292.5 229.7 L293.0 230.9 L293.5 231.7 L294.0 232.0 L294.5 231.9 L295.0 231.5 L295.5 231.0 L296.0 230.3 L296.5 229.4 L297.0 228.3 L297.5 227.1 L298.0 225.7 L298.5 224.3 L299.0 222.7 L299.5 221.0 L300.0 219.3 L300.5 217.5 L301.0 215.7 L301.5 213.9 L302.0 212.0 L302.5 209.9 L303.0 207.5 L303.5 204.8 L304.0 201.8 L304.5 198.5 L305.0 195.0 L305.5 191.4 L306.0 187.6 L306.5 183.8 L307.0 179.8 L307.5 175.9 L308.0 172.0 L308.5 167.6 L309.0 162.5 L309.5 156.7 L310.0 150.6 L310.5 144.3 L311.0 138.2 L311.5 132.3 L312.0 127.1 L312.5 122.6 L313.0 119.1 L313.5 116.8 L314.0 116.0 L314.5 117.0 L315.0 119.7 L315.5 123.9 L316.0 129.2 L316.5 135.5 L317.0 142.5 L317.5 149.7 L318.0 157.1 L318.5 164.3 L319.0 171.0 L319.5 178.1 L320.0 186.4 L320.5 195.5 L321.0 204.9 L321.5 214.4 L322.0 223.4 L322.5 231.5 L323.0 238.5 L323.5 243.8 L324.0 247.0 L324.5 249.0 L325.0 250.9 L325.5 252.6 L326.0 254.1 L326.5 255.3 L327.0 256.2 L327.5 256.8 L328.0 257.0 L328.5 257.0 L329.0 257.0 L329.5 257.0 L330.0 257.0 L330.5 257.0 L331.0 257.0 L331.5 257.0 L332.0 257.0 L332.5 256.7 L333.0 255.8 L333.5 254.4 L334.0 252.4 L334.5 250.0 L335.0 247.1 L335.5 243.8 L336.0 240.2 L336.5 236.0 L337.0 227.2 L337.5 213.8 L338.0 198.4 L338.5 183.5 L339.0 172.0 L339.5 162.6 L340.0 153.1 L340.5 144.2 L341.0 136.9 L341.5 131.9 L342.0 130.0 L342.5 132.2 L343.0 138.0 L343.5 146.1 L344.0 155.3 L344.5 164.4 L345.0 172.0 L345.5 178.7 L346.0 185.8 L346.5 193.0 L347.0 200.2 L347.5 207.1 L348.0 213.7 L348.5 219.6 L349.0 224.8 L349.5 229.0 L350.0 232.0 L350.5 234.4 L351.0 236.6 L351.5 238.8 L352.0 240.8 L352.5 242.8 L353.0 244.6 L353.5 246.2 L354.0 247.6 L354.5 248.9 L355.0 250.0 L355.5 250.8 L356.0 251.5 L356.5 251.9 L357.0 252.0 L357.5 251.7 L358.0 250.7 L358.5 249.1 L359.0 247.0 L359.5 244.5 L360.0 241.6 L360.5 238.4 L361.0 234.9 L361.5 231.2 L362.0 227.4 L362.5 223.6 L363.0 219.8 L363.5 216.0 L364.0 212.4 L364.5 209.0 L365.0 205.4 L365.5 201.3 L366.0 196.7 L366.5 191.9 L367.0 186.8 L367.5 181.7 L368.0 176.6 L368.5 171.7 L369.0 167.0 L369.5 162.8 L370.0 159.0 L370.5 155.9 L371.0 153.5 L371.5 152.0 L372.0 151.5 L372.5 153.2 L373.0 157.8 L373.5 164.3 L374.0 171.8 L374.5 179.2 L375.0 185.7 L375.5 190.3 L376.0 192.0 L376.5 191.8 L377.0 191.3 L377.5 190.6 L378.0 189.6 L378.5 188.4 L379.0 187.0 L379.5 183.9 L380.0 178.4 L380.5 171.7 L381.0 165.3 L381.5 160.4 L382.0 158.5 L382.5 160.4 L383.0 165.4 L383.5 172.7 L384.0 181.4 L384.5 190.5 L385.0 199.3 L385.5 206.7 L386.0 212.0 L386.5 215.9 L387.0 219.8 L387.5 223.5 L388.0 226.9 L388.5 229.8 L389.0 232.0 L389.5 233.5 L390.0 234.0 L390.5 233.7 L391.0 233.0 L391.5 231.9 L392.0 230.7 L392.5 229.3 L393.0 228.1 L393.5 227.0 L394.0 226.3 L394.5 226.0 L395.0 226.1 L395.5 226.5 L396.0 227.1 L396.5 227.8 L397.0 228.6 L397.5 229.4 L398.0 230.2 L398.5 230.9 L399.0 231.5 L399.5 231.9 L400.0 232.0 L400.5 231.4 L401.0 229.7 L401.5 227.0 L402.0 223.7 L402.5 219.9 L403.0 215.8 L403.5 211.6 L404.0 207.6 L404.5 203.8 L405.0 200.6 L405.5 198.1 L406.0 195.9 L406.5 193.7 L407.0 190.9 L407.5 187.0 L408.0 176.4 L408.5 156.4 L409.0 131.0 L409.5 104.2 L410.0 80.1 L410.5 62.7 L411.0 56.0 L411.5 62.1 L412.0 78.1 L412.5 100.5 L413.0 126.1 L413.5 151.3 L414.0 172.7 L414.5 187.0 L415.0 196.5 L415.5 205.7 L416.0 214.1 L416.5 221.3 L417.0 227.0 L417.5 230.7 L418.0 232.0 L418.5 229.1 L419.0 221.3 L419.5 209.8 L420.0 195.7 L420.5 180.5 L421.0 165.3 L421.5 151.2 L422.0 139.7 L422.5 131.9 L423.0 129.0 L423.5 136.0 L424.0 153.6 L424.5 176.9 L425.0 201.1 L425.5 221.1 L426.0 232.0 L426.5 236.6 L427.0 240.8 L427.5 244.7 L428.0 248.2 L428.5 251.4 L429.0 254.1 L429.5 256.5 L430.0 258.5 L430.5 260.0 L431.0 261.1 L431.5 261.8 L432.0 262.0 L432.5 261.3 L433.0 259.3 L433.5 256.3 L434.0 252.4 L434.5 247.7 L435.0 242.5 L435.5 237.0 L436.0 231.4 L436.5 225.7 L437.0 220.4 L437.5 215.4 L438.0 211.0 L438.5 207.4 L439.0 204.7 L439.5 203.3 L440.0 203.7 L440.5 210.4 L441.0 222.2 L441.5 236.4 L442.0 250.3 L442.5 261.4 L443.0 267.0 L443.5 268.8 L444.0 270.5 L444.5 272.0 L445.0 273.3 L445.5 274.4 L446.0 275.3 L446.5 276.1 L447.0 276.6 L447.5 276.9 L448.0 277.0 L448.5 270.5 L449.0 253.5 L449.5 229.4 L450.0 201.8 L450.5 174.2 L451.0 150.1 L451.5 133.1 L452.0 126.6 L452.5 137.1 L453.0 163.5 L453.5 197.9 L454.0 232.6 L454.5 259.9 L455.0 272.0 L455.5 273.8 L456.0 275.4 L456.5 276.9 L457.0 278.2 L457.5 279.4 L458.0 280.4 L458.5 281.3 L459.0 282.1 L459.5 282.7 L460.0 283.2 L460.5 283.5 L461.0 283.8 L461.5 284.0 L462.0 284.0 L462.5 283.9 L463.0 283.8 L463.5 283.5 L464.0 283.1 L464.5 282.7 L465.0 282.1 L465.5 281.5 L466.0 280.7 L466.5 279.9 L467.0 279.0 L467.5 278.0 L468.0 277.0 L468.5 274.4 L469.0 268.9 L469.5 261.3 L470.0 252.1 L470.5 241.9 L471.0 231.1 L471.5 220.5 L472.0 210.5 L472.5 201.7 L473.0 194.8 L473.5 190.2 L474.0 188.5 L474.5 193.2 L475.0 205.0 L475.5 220.2 L476.0 235.5 L476.5 247.3 L477.0 252.0 L477.5 246.8 L478.0 233.3 L478.5 214.4 L479.0 193.1 L479.5 172.4 L480.0 155.3 L480.5 144.7 L481.0 143.3 L481.5 149.4 L482.0 161.6 L482.5 179.4 L483.0 202.5 L483.5 230.2 L484.0 262.0 L485.0 214.4 L488.5 334.1 L492.4 224.0 L496.6 355.0 L501.1 254.7 L505.6 366.7 L509.7 245.8 L515.0 371.2 L517.5 238.3 L521.3 372.6 L526.5 309.5 L528.8 372.8 L531.9 232.5 L537.2 374.9 L540.7 288.6 L545.7 377.6 L548.2 277.0 L552.2 377.2 L557.0 278.3 L558.8 382.9 L562.1 364.2 L565.6 388.0 L569.3 313.2 L574.2 407.3 L577.7 383.7 L580.0 432.0 L580.0 434.0 Z" fill="url(#pg)" fill-opacity="1"/><path d="M69.0 432.0 L69.0 432.0 L69.5 431.0 L70.0 430.0 L70.5 429.0 L71.0 428.0 L71.5 426.9 L72.0 425.8 L72.5 424.7 L73.0 423.6 L73.5 422.5 L74.0 421.3 L74.5 420.2 L75.0 419.0 L75.5 417.8 L76.0 416.6 L76.5 415.3 L77.0 414.1 L77.5 412.8 L78.0 411.5 L78.5 410.3 L79.0 408.9 L79.5 407.6 L80.0 406.3 L80.5 404.9 L81.0 403.6 L81.5 402.2 L82.0 400.8 L82.5 399.4 L83.0 398.0 L83.5 396.6 L84.0 395.1 L84.5 393.6 L85.0 392.1 L85.5 390.5 L86.0 389.0 L86.5 387.4 L87.0 385.7 L87.5 384.1 L88.0 382.4 L88.5 380.7 L89.0 379.0 L89.5 377.3 L90.0 375.6 L90.5 373.8 L91.0 372.0 L91.5 370.3 L92.0 368.5 L92.5 366.7 L93.0 364.9 L93.5 363.1 L94.0 361.3 L94.5 359.5 L95.0 357.6 L95.5 355.8 L96.0 354.0 L96.5 352.2 L97.0 350.3 L97.5 348.4 L98.0 346.5 L98.5 344.5 L99.0 342.6 L99.5 340.6 L100.0 338.6 L100.5 336.6 L101.0 334.6 L101.5 332.6 L102.0 330.6 L102.5 328.6 L103.0 326.6 L103.5 324.6 L104.0 322.7 L104.5 320.7 L105.0 318.8 L105.5 316.9 L106.0 315.0 L106.5 313.1 L107.0 311.2 L107.5 309.2 L108.0 307.2 L108.5 305.1 L109.0 303.1 L109.5 301.1 L110.0 299.1 L110.5 297.1 L111.0 295.2 L111.5 293.3 L112.0 291.5 L112.5 289.8 L113.0 288.2 L113.5 286.7 L114.0 285.3 L114.5 284.1 L115.0 283.0 L115.5 282.0 L116.0 281.1 L116.5 280.1 L117.0 279.3 L117.5 278.4 L118.0 277.6 L118.5 276.9 L119.0 276.1 L119.5 275.4 L120.0 274.7 L120.5 274.1 L121.0 273.4 L121.5 272.8 L122.0 272.2 L122.5 271.6 L123.0 271.1 L123.5 270.5 L124.0 270.0 L124.5 269.5 L125.0 269.0 L125.5 268.5 L126.0 268.0 L126.5 267.5 L127.0 267.0 L127.5 266.5 L128.0 265.9 L128.5 265.4 L129.0 264.9 L129.5 264.4 L130.0 263.9 L130.5 263.4 L131.0 262.9 L131.5 262.4 L132.0 261.9 L132.5 261.4 L133.0 260.9 L133.5 260.5 L134.0 260.0 L134.5 259.5 L135.0 259.1 L135.5 258.7 L136.0 258.3 L136.5 257.9 L137.0 257.5 L137.5 257.1 L138.0 256.7 L138.5 256.4 L139.0 256.0 L139.5 255.7 L140.0 255.4 L140.5 255.2 L141.0 254.9 L141.5 254.7 L142.0 254.4 L142.5 254.3 L143.0 254.1 L143.5 253.9 L144.0 253.8 L144.5 253.7 L145.0 253.7 L145.5 253.6 L146.0 253.6 L146.5 253.6 L147.0 253.8 L147.5 254.0 L148.0 254.2 L148.5 254.5 L149.0 254.9 L149.5 255.4 L150.0 255.8 L150.5 256.4 L151.0 256.9 L151.5 257.5 L152.0 258.2 L152.5 258.8 L153.0 259.5 L153.5 260.2 L154.0 260.9 L154.5 261.6 L155.0 262.3 L155.5 263.0 L156.0 263.7 L156.5 264.3 L157.0 265.0 L157.5 265.7 L158.0 266.5 L158.5 267.4 L159.0 268.4 L159.5 269.4 L160.0 270.5 L160.5 271.6 L161.0 272.7 L161.5 273.8 L162.0 274.9 L162.5 275.9 L163.0 276.9 L163.5 277.8 L164.0 278.7 L164.5 279.4 L165.0 280.0 L165.5 280.5 L166.0 280.8 L166.5 281.0 L167.0 281.0 L167.5 280.9 L168.0 280.7 L168.5 280.4 L169.0 280.0 L169.5 279.5 L170.0 279.0 L170.5 278.5 L171.0 277.9 L171.5 277.2 L172.0 276.6 L172.5 275.9 L173.0 275.2 L173.5 274.4 L174.0 273.7 L174.5 273.0 L175.0 272.4 L175.5 271.7 L176.0 271.1 L176.5 270.5 L177.0 270.0 L177.5 269.5 L178.0 269.0 L178.5 268.5 L179.0 267.9 L179.5 267.4 L180.0 266.9 L180.5 266.3 L181.0 265.8 L181.5 265.3 L182.0 264.8 L182.5 264.3 L183.0 263.8 L183.5 263.4 L184.0 263.0 L184.5 262.6 L185.0 262.2 L185.5 261.9 L186.0 261.7 L186.5 261.5 L187.0 261.3 L187.5 261.1 L188.0 260.9 L188.5 260.7 L189.0 260.5 L189.5 260.3 L190.0 260.2 L190.5 260.0 L191.0 259.8 L191.5 259.7 L192.0 259.5 L192.5 259.4 L193.0 259.2 L193.5 259.1 L194.0 259.0 L194.5 258.8 L195.0 258.7 L195.5 258.6 L196.0 258.5 L196.5 258.4 L197.0 258.3 L197.5 258.3 L198.0 258.2 L198.5 258.1 L199.0 258.1 L199.5 258.0 L200.0 258.0 L200.5 258.0 L201.0 258.0 L201.5 258.1 L202.0 258.2 L202.5 258.5 L203.0 258.9 L203.5 259.3 L204.0 259.8 L204.5 260.3 L205.0 260.9 L205.5 261.4 L206.0 262.0 L206.5 262.6 L207.0 263.3 L207.5 264.1 L208.0 264.9 L208.5 265.8 L209.0 266.8 L209.5 267.8 L210.0 268.9 L210.5 270.1 L211.0 271.3 L211.5 272.6 L212.0 273.9 L212.5 275.2 L213.0 276.6 L213.5 278.0 L214.0 279.6 L214.5 281.5 L215.0 283.7 L215.5 286.1 L216.0 288.8 L216.5 291.6 L217.0 294.6 L217.5 297.7 L218.0 300.8 L218.5 304.0 L219.0 307.2 L219.5 310.3 L220.0 313.4 L220.5 316.4 L221.0 319.2 L221.5 321.9 L222.0 324.4 L222.5 326.6 L223.0 328.6 L223.5 330.2 L224.0 331.5 L224.5 332.4 L225.0 332.9 L225.5 332.9 L226.0 331.6 L226.5 329.0 L227.0 325.2 L227.5 320.4 L228.0 314.7 L228.5 308.3 L229.0 301.3 L229.5 293.8 L230.0 286.1 L230.5 278.3 L231.0 270.5 L231.5 262.8 L232.0 255.4 L232.5 248.5 L233.0 242.2 L233.5 236.7 L234.0 232.0 L234.5 227.9 L235.0 223.9 L235.5 220.0 L236.0 216.3 L236.5 212.7 L237.0 209.2 L237.5 205.9 L238.0 202.8 L238.5 199.8 L239.0 197.0 L239.5 194.4 L240.0 192.0 L240.5 189.6 L241.0 187.2 L241.5 184.7 L242.0 182.3 L242.5 180.1 L243.0 178.1 L243.5 176.4 L244.0 175.1 L244.5 174.3 L245.0 174.0 L245.5 174.5 L246.0 175.9 L246.5 178.0 L247.0 180.7 L247.5 183.9 L248.0 187.5 L248.5 191.2 L249.0 194.9 L249.5 198.6 L250.0 202.0 L250.5 205.4 L251.0 209.0 L251.5 212.9 L252.0 216.9 L252.5 220.9 L253.0 225.1 L253.5 229.2 L254.0 233.2 L254.5 237.2 L255.0 241.0 L255.5 244.9 L256.0 249.1 L256.5 253.5 L257.0 258.1 L257.5 262.7 L258.0 267.4 L258.5 272.0 L259.0 276.4 L259.5 280.6 L260.0 284.5 L260.5 288.0 L261.0 291.0 L261.5 293.5 L262.0 295.4 L262.5 296.6 L263.0 297.0 L263.5 296.1 L264.0 293.4 L264.5 289.3 L265.0 284.0 L265.5 277.6 L266.0 270.5 L266.5 262.8 L267.0 254.8 L267.5 246.7 L268.0 238.7 L268.5 231.2 L269.0 224.2 L269.5 218.1 L270.0 213.0 L270.5 209.2 L271.0 207.0 L271.5 205.6 L272.0 204.3 L272.5 203.0 L273.0 201.8 L273.5 200.6 L274.0 199.5 L274.5 198.4 L275.0 197.4 L275.5 196.4 L276.0 195.5 L276.5 194.6 L277.0 193.8 L277.5 193.1 L278.0 192.4 L278.5 191.8 L279.0 191.2 L279.5 190.7 L280.0 190.2 L280.5 189.9 L281.0 189.6 L281.5 189.3 L282.0 189.1 L282.5 189.0 L283.0 189.0 L283.5 189.4 L284.0 190.6 L284.5 192.4 L285.0 194.6 L285.5 197.0 L286.0 199.5 L286.5 201.9 L287.0 204.0 L287.5 206.1 L288.0 208.4 L288.5 210.9 L289.0 213.5 L289.5 216.2 L290.0 218.8 L290.5 221.4 L291.0 223.8 L291.5 226.1 L292.0 228.0 L292.5 229.7 L293.0 230.9 L293.5 231.7 L294.0 232.0 L294.5 231.9 L295.0 231.5 L295.5 231.0 L296.0 230.3 L296.5 229.4 L297.0 228.3 L297.5 227.1 L298.0 225.7 L298.5 224.3 L299.0 222.7 L299.5 221.0 L300.0 219.3 L300.5 217.5 L301.0 215.7 L301.5 213.9 L302.0 212.0 L302.5 209.9 L303.0 207.5 L303.5 204.8 L304.0 201.8 L304.5 198.5 L305.0 195.0 L305.5 191.4 L306.0 187.6 L306.5 183.8 L307.0 179.8 L307.5 175.9 L308.0 172.0 L308.5 167.6 L309.0 162.5 L309.5 156.7 L310.0 150.6 L310.5 144.3 L311.0 138.2 L311.5 132.3 L312.0 127.1 L312.5 122.6 L313.0 119.1 L313.5 116.8 L314.0 116.0 L314.5 117.0 L315.0 119.7 L315.5 123.9 L316.0 129.2 L316.5 135.5 L317.0 142.5 L317.5 149.7 L318.0 157.1 L318.5 164.3 L319.0 171.0 L319.5 178.1 L320.0 186.4 L320.5 195.5 L321.0 204.9 L321.5 214.4 L322.0 223.4 L322.5 231.5 L323.0 238.5 L323.5 243.8 L324.0 247.0 L324.5 249.0 L325.0 250.9 L325.5 252.6 L326.0 254.1 L326.5 255.3 L327.0 256.2 L327.5 256.8 L328.0 257.0 L328.5 257.0 L329.0 257.0 L329.5 257.0 L330.0 257.0 L330.5 257.0 L331.0 257.0 L331.5 257.0 L332.0 257.0 L332.5 256.7 L333.0 255.8 L333.5 254.4 L334.0 252.4 L334.5 250.0 L335.0 247.1 L335.5 243.8 L336.0 240.2 L336.5 236.0 L337.0 227.2 L337.5 213.8 L338.0 198.4 L338.5 183.5 L339.0 172.0 L339.5 162.6 L340.0 153.1 L340.5 144.2 L341.0 136.9 L341.5 131.9 L342.0 130.0 L342.5 132.2 L343.0 138.0 L343.5 146.1 L344.0 155.3 L344.5 164.4 L345.0 172.0 L345.5 178.7 L346.0 185.8 L346.5 193.0 L347.0 200.2 L347.5 207.1 L348.0 213.7 L348.5 219.6 L349.0 224.8 L349.5 229.0 L350.0 232.0 L350.5 234.4 L351.0 236.6 L351.5 238.8 L352.0 240.8 L352.5 242.8 L353.0 244.6 L353.5 246.2 L354.0 247.6 L354.5 248.9 L355.0 250.0 L355.5 250.8 L356.0 251.5 L356.5 251.9 L357.0 252.0 L357.5 251.7 L358.0 250.7 L358.5 249.1 L359.0 247.0 L359.5 244.5 L360.0 241.6 L360.5 238.4 L361.0 234.9 L361.5 231.2 L362.0 227.4 L362.5 223.6 L363.0 219.8 L363.5 216.0 L364.0 212.4 L364.5 209.0 L365.0 205.4 L365.5 201.3 L366.0 196.7 L366.5 191.9 L367.0 186.8 L367.5 181.7 L368.0 176.6 L368.5 171.7 L369.0 167.0 L369.5 162.8 L370.0 159.0 L370.5 155.9 L371.0 153.5 L371.5 152.0 L372.0 151.5 L372.5 153.2 L373.0 157.8 L373.5 164.3 L374.0 171.8 L374.5 179.2 L375.0 185.7 L375.5 190.3 L376.0 192.0 L376.5 191.8 L377.0 191.3 L377.5 190.6 L378.0 189.6 L378.5 188.4 L379.0 187.0 L379.5 183.9 L380.0 178.4 L380.5 171.7 L381.0 165.3 L381.5 160.4 L382.0 158.5 L382.5 160.4 L383.0 165.4 L383.5 172.7 L384.0 181.4 L384.5 190.5 L385.0 199.3 L385.5 206.7 L386.0 212.0 L386.5 215.9 L387.0 219.8 L387.5 223.5 L388.0 226.9 L388.5 229.8 L389.0 232.0 L389.5 233.5 L390.0 234.0 L390.5 233.7 L391.0 233.0 L391.5 231.9 L392.0 230.7 L392.5 229.3 L393.0 228.1 L393.5 227.0 L394.0 226.3 L394.5 226.0 L395.0 226.1 L395.5 226.5 L396.0 227.1 L396.5 227.8 L397.0 228.6 L397.5 229.4 L398.0 230.2 L398.5 230.9 L399.0 231.5 L399.5 231.9 L400.0 232.0 L400.5 231.4 L401.0 229.7 L401.5 227.0 L402.0 223.7 L402.5 219.9 L403.0 215.8 L403.5 211.6 L404.0 207.6 L404.5 203.8 L405.0 200.6 L405.5 198.1 L406.0 195.9 L406.5 193.7 L407.0 190.9 L407.5 187.0 L408.0 176.4 L408.5 156.4 L409.0 131.0 L409.5 104.2 L410.0 80.1 L410.5 62.7 L411.0 56.0 L411.5 62.1 L412.0 78.1 L412.5 100.5 L413.0 126.1 L413.5 151.3 L414.0 172.7 L414.5 187.0 L415.0 196.5 L415.5 205.7 L416.0 214.1 L416.5 221.3 L417.0 227.0 L417.5 230.7 L418.0 232.0 L418.5 229.1 L419.0 221.3 L419.5 209.8 L420.0 195.7 L420.5 180.5 L421.0 165.3 L421.5 151.2 L422.0 139.7 L422.5 131.9 L423.0 129.0 L423.5 136.0 L424.0 153.6 L424.5 176.9 L425.0 201.1 L425.5 221.1 L426.0 232.0 L426.5 236.6 L427.0 240.8 L427.5 244.7 L428.0 248.2 L428.5 251.4 L429.0 254.1 L429.5 256.5 L430.0 258.5 L430.5 260.0 L431.0 261.1 L431.5 261.8 L432.0 262.0 L432.5 261.3 L433.0 259.3 L433.5 256.3 L434.0 252.4 L434.5 247.7 L435.0 242.5 L435.5 237.0 L436.0 231.4 L436.5 225.7 L437.0 220.4 L437.5 215.4 L438.0 211.0 L438.5 207.4 L439.0 204.7 L439.5 203.3 L440.0 203.7 L440.5 210.4 L441.0 222.2 L441.5 236.4 L442.0 250.3 L442.5 261.4 L443.0 267.0 L443.5 268.8 L444.0 270.5 L444.5 272.0 L445.0 273.3 L445.5 274.4 L446.0 275.3 L446.5 276.1 L447.0 276.6 L447.5 276.9 L448.0 277.0 L448.5 270.5 L449.0 253.5 L449.5 229.4 L450.0 201.8 L450.5 174.2 L451.0 150.1 L451.5 133.1 L452.0 126.6 L452.5 137.1 L453.0 163.5 L453.5 197.9 L454.0 232.6 L454.5 259.9 L455.0 272.0 L455.5 273.8 L456.0 275.4 L456.5 276.9 L457.0 278.2 L457.5 279.4 L458.0 280.4 L458.5 281.3 L459.0 282.1 L459.5 282.7 L460.0 283.2 L460.5 283.5 L461.0 283.8 L461.5 284.0 L462.0 284.0 L462.5 283.9 L463.0 283.8 L463.5 283.5 L464.0 283.1 L464.5 282.7 L465.0 282.1 L465.5 281.5 L466.0 280.7 L466.5 279.9 L467.0 279.0 L467.5 278.0 L468.0 277.0 L468.5 274.4 L469.0 268.9 L469.5 261.3 L470.0 252.1 L470.5 241.9 L471.0 231.1 L471.5 220.5 L472.0 210.5 L472.5 201.7 L473.0 194.8 L473.5 190.2 L474.0 188.5 L474.5 193.2 L475.0 205.0 L475.5 220.2 L476.0 235.5 L476.5 247.3 L477.0 252.0 L477.5 246.8 L478.0 233.3 L478.5 214.4 L479.0 193.1 L479.5 172.4 L480.0 155.3 L480.5 144.7 L481.0 143.3 L481.5 149.4 L482.0 161.6 L482.5 179.4 L483.0 202.5 L483.5 230.2 L484.0 262.0 L485.0 214.4 L488.5 334.1 L492.4 224.0 L496.6 355.0 L501.1 254.7 L505.6 366.7 L509.7 245.8 L515.0 371.2 L517.5 238.3 L521.3 372.6 L526.5 309.5 L528.8 372.8 L531.9 232.5 L537.2 374.9 L540.7 288.6 L545.7 377.6 L548.2 277.0 L552.2 377.2 L557.0 278.3 L558.8 382.9 L562.1 364.2 L565.6 388.0 L569.3 313.2 L574.2 407.3 L577.7 383.7" fill="none" stroke="#ee86c0" stroke-width="1.75" stroke-linejoin="round"/>
<path d="M101.0 434.0 L101.0 432.0 L101.5 429.7 L102.0 427.4 L102.5 425.2 L103.0 422.9 L103.5 420.7 L104.0 418.5 L104.5 416.3 L105.0 414.1 L105.5 412.0 L106.0 409.8 L106.5 407.7 L107.0 405.6 L107.5 403.5 L108.0 401.5 L108.5 399.5 L109.0 397.5 L109.5 395.5 L110.0 393.5 L110.5 391.6 L111.0 389.7 L111.5 387.8 L112.0 386.0 L112.5 384.2 L113.0 382.4 L113.5 380.6 L114.0 378.9 L114.5 377.2 L115.0 375.5 L115.5 373.8 L116.0 372.2 L116.5 370.6 L117.0 369.0 L117.5 367.4 L118.0 365.8 L118.5 364.2 L119.0 362.6 L119.5 361.1 L120.0 359.5 L120.5 358.0 L121.0 356.5 L121.5 354.9 L122.0 353.4 L122.5 351.9 L123.0 350.4 L123.5 348.8 L124.0 347.3 L124.5 345.8 L125.0 344.2 L125.5 342.7 L126.0 341.1 L126.5 339.6 L127.0 338.0 L127.5 336.4 L128.0 334.8 L128.5 333.2 L129.0 331.6 L129.5 330.0 L130.0 328.4 L130.5 326.7 L131.0 325.1 L131.5 323.5 L132.0 321.9 L132.5 320.2 L133.0 318.6 L133.5 317.0 L134.0 315.4 L134.5 313.7 L135.0 312.1 L135.5 310.5 L136.0 308.9 L136.5 307.3 L137.0 305.8 L137.5 304.2 L138.0 302.6 L138.5 301.1 L139.0 299.6 L139.5 298.1 L140.0 296.6 L140.5 295.1 L141.0 293.6 L141.5 292.2 L142.0 290.8 L142.5 289.4 L143.0 288.0 L143.5 286.6 L144.0 285.3 L144.5 283.9 L145.0 282.6 L145.5 281.2 L146.0 279.8 L146.5 278.5 L147.0 277.2 L147.5 275.8 L148.0 274.5 L148.5 273.2 L149.0 271.9 L149.5 270.6 L150.0 269.4 L150.5 268.1 L151.0 266.9 L151.5 265.7 L152.0 264.5 L152.5 263.3 L153.0 262.2 L153.5 261.1 L154.0 260.0 L154.5 258.9 L155.0 257.9 L155.5 256.8 L156.0 255.9 L156.5 254.9 L157.0 254.0 L157.5 253.1 L158.0 252.2 L158.5 251.2 L159.0 250.2 L159.5 249.2 L160.0 248.3 L160.5 247.3 L161.0 246.3 L161.5 245.4 L162.0 244.4 L162.5 243.5 L163.0 242.7 L163.5 241.9 L164.0 241.1 L164.5 240.3 L165.0 239.7 L165.5 239.1 L166.0 238.5 L166.5 238.0 L167.0 237.6 L167.5 237.3 L168.0 237.1 L168.5 237.0 L169.0 237.0 L169.5 237.1 L170.0 237.3 L170.5 237.6 L171.0 238.1 L171.5 238.5 L172.0 239.1 L172.5 239.7 L173.0 240.4 L173.5 241.1 L174.0 241.9 L174.5 242.7 L175.0 243.4 L175.5 244.2 L176.0 245.0 L176.5 245.8 L177.0 246.6 L177.5 247.3 L178.0 248.0 L178.5 248.7 L179.0 249.5 L179.5 250.4 L180.0 251.3 L180.5 252.3 L181.0 253.3 L181.5 254.3 L182.0 255.3 L182.5 256.2 L183.0 257.1 L183.5 257.9 L184.0 258.7 L184.5 259.3 L185.0 259.8 L185.5 260.2 L186.0 260.4 L186.5 260.5 L187.0 260.5 L187.5 260.5 L188.0 260.5 L188.5 260.4 L189.0 260.4 L189.5 260.3 L190.0 260.3 L190.5 260.2 L191.0 260.2 L191.5 260.1 L192.0 260.0 L192.5 259.9 L193.0 259.9 L193.5 259.8 L194.0 259.7 L194.5 259.6 L195.0 259.5 L195.5 259.4 L196.0 259.2 L196.5 259.1 L197.0 259.0 L197.5 258.9 L198.0 258.7 L198.5 258.5 L199.0 258.2 L199.5 257.9 L200.0 257.6 L200.5 257.3 L201.0 256.9 L201.5 256.5 L202.0 256.1 L202.5 255.6 L203.0 255.2 L203.5 254.7 L204.0 254.1 L204.5 253.6 L205.0 253.0 L205.5 252.3 L206.0 251.3 L206.5 250.2 L207.0 248.8 L207.5 247.4 L208.0 245.8 L208.5 244.1 L209.0 242.4 L209.5 240.7 L210.0 239.0 L210.5 237.3 L211.0 235.7 L211.5 234.2 L212.0 232.9 L212.5 231.7 L213.0 230.7 L213.5 230.0 L214.0 229.4 L214.5 228.9 L215.0 228.5 L215.5 228.1 L216.0 227.7 L216.5 227.4 L217.0 227.1 L217.5 226.8 L218.0 226.5 L218.5 226.3 L219.0 226.0 L219.5 225.7 L220.0 225.5 L220.5 225.2 L221.0 224.9 L221.5 224.5 L222.0 224.1 L222.5 223.7 L223.0 223.2 L223.5 222.6 L224.0 222.0 L224.5 221.2 L225.0 220.1 L225.5 218.7 L226.0 217.1 L226.5 215.3 L227.0 213.3 L227.5 211.3 L228.0 209.2 L228.5 207.0 L229.0 204.9 L229.5 202.7 L230.0 200.7 L230.5 198.8 L231.0 197.0 L231.5 195.2 L232.0 193.3 L232.5 191.2 L233.0 189.1 L233.5 187.0 L234.0 184.9 L234.5 182.9 L235.0 181.1 L235.5 179.5 L236.0 178.1 L236.5 177.0 L237.0 176.3 L237.5 176.0 L238.0 176.1 L238.5 176.6 L239.0 177.3 L239.5 178.4 L240.0 179.6 L240.5 181.1 L241.0 182.8 L241.5 184.5 L242.0 186.4 L242.5 188.3 L243.0 190.2 L243.5 192.1 L244.0 194.0 L244.5 195.9 L245.0 197.9 L245.5 200.0 L246.0 202.2 L246.5 204.6 L247.0 207.1 L247.5 209.6 L248.0 212.3 L248.5 215.1 L249.0 218.0 L249.5 221.0 L250.0 224.1 L250.5 227.3 L251.0 230.6 L251.5 234.2 L252.0 238.2 L252.5 242.6 L253.0 247.3 L253.5 252.1 L254.0 257.0 L254.5 261.9 L255.0 266.7 L255.5 271.3 L256.0 275.6 L256.5 279.6 L257.0 284.2 L257.5 288.8 L258.0 292.9 L258.5 295.9 L259.0 297.0 L259.5 295.2 L260.0 290.1 L260.5 282.4 L261.0 272.9 L261.5 262.1 L262.0 250.9 L262.5 239.8 L263.0 229.5 L263.5 220.7 L264.0 214.1 L264.5 210.3 L265.0 208.9 L265.5 207.7 L266.0 206.5 L266.5 205.4 L267.0 204.4 L267.5 203.5 L268.0 202.6 L268.5 201.9 L269.0 201.2 L269.5 200.7 L270.0 200.2 L270.5 199.9 L271.0 199.6 L271.5 199.5 L272.0 199.4 L272.5 199.6 L273.0 200.0 L273.5 200.8 L274.0 201.7 L274.5 202.8 L275.0 204.1 L275.5 205.4 L276.0 206.8 L276.5 208.2 L277.0 209.6 L277.5 210.9 L278.0 212.0 L278.5 213.0 L279.0 214.0 L279.5 214.9 L280.0 215.7 L280.5 216.6 L281.0 217.5 L281.5 218.4 L282.0 219.4 L282.5 220.5 L283.0 221.7 L283.5 223.1 L284.0 224.6 L284.5 226.4 L285.0 229.5 L285.5 234.1 L286.0 239.5 L286.5 245.3 L287.0 250.7 L287.5 255.3 L288.0 258.5 L288.5 259.7 L289.0 258.7 L289.5 256.0 L290.0 251.9 L290.5 247.1 L291.0 241.9 L291.5 236.7 L292.0 232.0 L292.5 227.1 L293.0 221.2 L293.5 215.0 L294.0 208.9 L294.5 203.5 L295.0 199.2 L295.5 196.7 L296.0 196.4 L296.5 197.4 L297.0 199.2 L297.5 201.7 L298.0 204.7 L298.5 207.9 L299.0 211.2 L299.5 214.3 L300.0 217.0 L300.5 219.6 L301.0 222.6 L301.5 225.7 L302.0 228.9 L302.5 232.1 L303.0 235.0 L303.5 237.6 L304.0 239.7 L304.5 241.2 L305.0 241.9 L305.5 241.0 L306.0 235.1 L306.5 224.9 L307.0 211.8 L307.5 196.6 L308.0 180.7 L308.5 165.1 L309.0 151.0 L309.5 139.6 L310.0 131.8 L310.5 129.0 L311.0 131.8 L311.5 139.3 L312.0 150.8 L312.5 165.1 L313.0 181.3 L313.5 198.3 L314.0 215.3 L314.5 231.1 L315.0 244.8 L315.5 255.4 L316.0 262.0 L316.5 266.1 L317.0 270.0 L317.5 273.7 L318.0 277.2 L318.5 280.4 L319.0 283.3 L319.5 285.8 L320.0 287.9 L320.5 289.7 L321.0 290.9 L321.5 291.7 L322.0 292.0 L322.5 290.6 L323.0 286.8 L323.5 281.2 L324.0 274.4 L324.5 267.0 L325.0 259.6 L325.5 252.8 L326.0 247.2 L326.5 243.4 L327.0 242.0 L327.5 242.6 L328.0 244.2 L328.5 246.6 L329.0 249.7 L329.5 253.3 L330.0 257.2 L330.5 261.2 L331.0 265.1 L331.5 268.8 L332.0 272.0 L332.5 275.1 L333.0 278.4 L333.5 281.9 L334.0 285.6 L334.5 289.4 L335.0 293.2 L335.5 297.1 L336.0 300.9 L336.5 304.7 L337.0 308.4 L337.5 311.9 L338.0 315.3 L338.5 318.4 L339.0 321.2 L339.5 323.7 L340.0 325.9 L340.5 327.6 L341.0 328.9 L341.5 329.7 L342.0 330.0 L342.5 328.5 L343.0 324.4 L343.5 318.0 L344.0 309.8 L344.5 300.3 L345.0 289.8 L345.5 278.9 L346.0 267.9 L346.5 257.3 L347.0 247.4 L347.5 238.9 L348.0 232.0 L348.5 225.9 L349.0 219.7 L349.5 213.3 L350.0 207.1 L350.5 201.2 L351.0 195.7 L351.5 190.9 L352.0 186.8 L352.5 183.7 L353.0 181.7 L353.5 181.0 L354.0 182.9 L354.5 188.2 L355.0 196.1 L355.5 206.0 L356.0 217.3 L356.5 229.2 L357.0 241.0 L357.5 252.2 L358.0 262.0 L358.5 271.8 L359.0 282.9 L359.5 294.5 L360.0 305.9 L360.5 316.1 L361.0 324.4 L361.5 330.0 L362.0 332.0 L362.5 330.2 L363.0 325.3 L363.5 318.0 L364.0 308.8 L364.5 298.5 L365.0 287.8 L365.5 277.2 L366.0 267.5 L366.5 259.4 L367.0 253.4 L367.5 250.3 L368.0 250.4 L368.5 252.9 L369.0 257.0 L369.5 262.1 L370.0 267.7 L370.5 273.0 L371.0 277.6 L371.5 280.8 L372.0 282.0 L372.5 281.1 L373.0 278.7 L373.5 275.3 L374.0 271.1 L374.5 266.7 L375.0 262.5 L375.5 258.9 L376.0 256.3 L376.5 255.0 L377.0 257.7 L377.5 267.6 L378.0 283.2 L378.5 302.5 L379.0 323.8 L379.5 345.3 L380.0 365.2 L380.5 381.7 L381.0 392.9 L381.5 397.0 L382.0 395.5 L382.5 391.3 L383.0 385.1 L383.5 377.5 L384.0 368.9 L384.5 360.1 L385.0 351.5 L385.5 343.9 L386.0 337.7 L386.5 333.5 L387.0 332.0 L387.5 332.9 L388.0 335.4 L388.5 339.2 L389.0 343.9 L389.5 349.3 L390.0 355.0 L390.5 360.7 L391.0 366.1 L391.5 370.8 L392.0 374.6 L392.5 377.1 L393.0 378.0 L393.5 376.6 L394.0 372.7 L394.5 367.0 L395.0 360.0 L395.5 352.5 L396.0 345.0 L396.5 338.0 L397.0 332.3 L397.5 328.4 L398.0 327.0 L398.5 328.7 L399.0 333.3 L399.5 340.0 L400.0 348.1 L400.5 356.7 L401.0 365.3 L401.5 372.9 L402.0 378.9 L402.5 382.4 L403.0 382.1 L403.5 372.9 L404.0 357.1 L404.5 338.2 L405.0 320.0 L405.5 306.4 L406.0 301.0 L406.5 302.5 L407.0 306.8 L407.5 313.2 L408.0 321.4 L408.5 330.9 L409.0 341.2 L409.5 351.7 L410.0 362.1 L410.5 371.7 L411.0 380.3 L411.5 387.1 L412.0 391.8 L412.5 393.9 L413.0 392.5 L413.5 386.9 L414.0 378.1 L414.5 367.2 L415.0 355.0 L415.5 342.6 L416.0 331.1 L416.5 321.3 L417.0 314.3 L417.5 311.1 L418.0 312.7 L418.5 319.1 L419.0 329.0 L419.5 341.4 L420.0 355.1 L420.5 368.9 L421.0 381.6 L421.5 392.2 L422.0 399.4 L422.5 402.0 L423.0 399.1 L423.5 391.2 L424.0 379.6 L424.5 365.6 L425.0 350.5 L425.5 335.4 L426.0 321.8 L426.5 310.9 L427.0 303.9 L427.5 302.3 L428.0 310.9 L428.5 328.4 L429.0 350.7 L429.5 373.3 L430.0 392.2 L430.5 402.9 L431.0 401.8 L431.5 390.1 L432.0 371.7 L432.5 350.6 L433.0 330.7 L433.5 315.8 L434.0 310.0 L434.5 311.5 L435.0 315.9 L435.5 322.4 L436.0 330.8 L436.5 340.4 L437.0 350.7 L437.5 361.3 L438.0 371.6 L438.5 381.2 L439.0 389.6 L439.5 396.1 L440.0 400.5 L440.5 402.0 L441.0 399.3 L441.5 392.0 L442.0 381.2 L442.5 368.2 L443.0 354.1 L443.5 340.1 L444.0 327.4 L444.5 317.3 L445.0 310.8 L445.5 309.2 L446.0 314.6 L446.5 326.1 L447.0 341.8 L447.5 359.7 L448.0 377.7 L448.5 394.0 L449.0 406.6 L449.5 413.3 L450.0 413.7 L450.5 412.0 L451.0 409.1 L451.5 405.0 L452.0 400.1 L452.5 394.6 L453.0 388.7 L453.5 382.7 L454.0 376.7 L454.5 371.0 L455.0 365.9 L455.5 361.4 L456.0 358.0 L456.5 355.8 L457.0 355.0 L457.5 356.6 L458.0 360.8 L458.5 366.7 L459.0 373.5 L459.5 380.3 L460.0 386.2 L460.5 390.4 L461.0 392.0 L461.5 390.3 L462.0 386.4 L462.5 381.6 L463.0 377.7 L463.5 376.0 L464.0 378.2 L464.5 383.7 L465.0 391.1 L465.5 399.0 L466.0 405.8 L466.5 410.2 L467.0 410.6 L467.5 406.5 L468.0 398.4 L468.5 387.3 L469.0 373.7 L469.5 358.6 L470.0 342.6 L470.5 326.6 L471.0 311.2 L471.5 297.3 L472.0 285.6 L472.5 276.8 L473.0 271.9 L473.5 272.7 L474.0 289.7 L474.5 319.4 L475.0 355.2 L475.5 390.3 L476.0 418.0 L476.5 431.6 L477.0 431.4 L477.5 428.7 L478.0 422.9 L478.5 413.2 L479.0 398.7 L479.5 378.6 L480.0 352.0 L481.0 366.4 L482.2 405.0 L483.4 386.3 L485.8 407.8 L488.4 292.9 L490.4 414.0 L492.1 385.9 L493.9 418.3 L495.2 320.7 L497.0 422.1 L499.0 334.5 L501.7 423.6 L503.6 386.3 L505.7 424.8 L508.1 407.2 L510.8 425.2 L512.2 378.0 L514.7 429.9 L516.4 347.9 L519.4 430.1 L521.0 379.4 L523.7 429.2 L525.8 393.9 L527.5 431.8 L530.6 408.0 L532.3 431.2 L535.4 353.5 L538.0 430.8 L539.7 407.4 L542.3 433.8 L544.9 326.3 L548.0 433.6 L550.9 426.0 L552.5 431.7 L554.5 370.4 L556.3 432.6 L558.6 381.0 L561.0 432.6 L562.5 385.3 L565.2 434.2 L567.8 418.4 L569.3 433.5 L572.3 427.5 L573.8 434.9 L576.6 391.2 L579.7 433.5 L581.8 400.6 L583.3 434.1 L585.5 381.4 L586.9 432.2 L588.8 395.8 L590.6 433.4 L592.4 421.6 L594.3 434.2 L596.9 390.7 L598.0 432.0 L598.0 434.0 Z" fill="url(#og)" fill-opacity="1"/><path d="M101.0 432.0 L101.0 432.0 L101.5 429.7 L102.0 427.4 L102.5 425.2 L103.0 422.9 L103.5 420.7 L104.0 418.5 L104.5 416.3 L105.0 414.1 L105.5 412.0 L106.0 409.8 L106.5 407.7 L107.0 405.6 L107.5 403.5 L108.0 401.5 L108.5 399.5 L109.0 397.5 L109.5 395.5 L110.0 393.5 L110.5 391.6 L111.0 389.7 L111.5 387.8 L112.0 386.0 L112.5 384.2 L113.0 382.4 L113.5 380.6 L114.0 378.9 L114.5 377.2 L115.0 375.5 L115.5 373.8 L116.0 372.2 L116.5 370.6 L117.0 369.0 L117.5 367.4 L118.0 365.8 L118.5 364.2 L119.0 362.6 L119.5 361.1 L120.0 359.5 L120.5 358.0 L121.0 356.5 L121.5 354.9 L122.0 353.4 L122.5 351.9 L123.0 350.4 L123.5 348.8 L124.0 347.3 L124.5 345.8 L125.0 344.2 L125.5 342.7 L126.0 341.1 L126.5 339.6 L127.0 338.0 L127.5 336.4 L128.0 334.8 L128.5 333.2 L129.0 331.6 L129.5 330.0 L130.0 328.4 L130.5 326.7 L131.0 325.1 L131.5 323.5 L132.0 321.9 L132.5 320.2 L133.0 318.6 L133.5 317.0 L134.0 315.4 L134.5 313.7 L135.0 312.1 L135.5 310.5 L136.0 308.9 L136.5 307.3 L137.0 305.8 L137.5 304.2 L138.0 302.6 L138.5 301.1 L139.0 299.6 L139.5 298.1 L140.0 296.6 L140.5 295.1 L141.0 293.6 L141.5 292.2 L142.0 290.8 L142.5 289.4 L143.0 288.0 L143.5 286.6 L144.0 285.3 L144.5 283.9 L145.0 282.6 L145.5 281.2 L146.0 279.8 L146.5 278.5 L147.0 277.2 L147.5 275.8 L148.0 274.5 L148.5 273.2 L149.0 271.9 L149.5 270.6 L150.0 269.4 L150.5 268.1 L151.0 266.9 L151.5 265.7 L152.0 264.5 L152.5 263.3 L153.0 262.2 L153.5 261.1 L154.0 260.0 L154.5 258.9 L155.0 257.9 L155.5 256.8 L156.0 255.9 L156.5 254.9 L157.0 254.0 L157.5 253.1 L158.0 252.2 L158.5 251.2 L159.0 250.2 L159.5 249.2 L160.0 248.3 L160.5 247.3 L161.0 246.3 L161.5 245.4 L162.0 244.4 L162.5 243.5 L163.0 242.7 L163.5 241.9 L164.0 241.1 L164.5 240.3 L165.0 239.7 L165.5 239.1 L166.0 238.5 L166.5 238.0 L167.0 237.6 L167.5 237.3 L168.0 237.1 L168.5 237.0 L169.0 237.0 L169.5 237.1 L170.0 237.3 L170.5 237.6 L171.0 238.1 L171.5 238.5 L172.0 239.1 L172.5 239.7 L173.0 240.4 L173.5 241.1 L174.0 241.9 L174.5 242.7 L175.0 243.4 L175.5 244.2 L176.0 245.0 L176.5 245.8 L177.0 246.6 L177.5 247.3 L178.0 248.0 L178.5 248.7 L179.0 249.5 L179.5 250.4 L180.0 251.3 L180.5 252.3 L181.0 253.3 L181.5 254.3 L182.0 255.3 L182.5 256.2 L183.0 257.1 L183.5 257.9 L184.0 258.7 L184.5 259.3 L185.0 259.8 L185.5 260.2 L186.0 260.4 L186.5 260.5 L187.0 260.5 L187.5 260.5 L188.0 260.5 L188.5 260.4 L189.0 260.4 L189.5 260.3 L190.0 260.3 L190.5 260.2 L191.0 260.2 L191.5 260.1 L192.0 260.0 L192.5 259.9 L193.0 259.9 L193.5 259.8 L194.0 259.7 L194.5 259.6 L195.0 259.5 L195.5 259.4 L196.0 259.2 L196.5 259.1 L197.0 259.0 L197.5 258.9 L198.0 258.7 L198.5 258.5 L199.0 258.2 L199.5 257.9 L200.0 257.6 L200.5 257.3 L201.0 256.9 L201.5 256.5 L202.0 256.1 L202.5 255.6 L203.0 255.2 L203.5 254.7 L204.0 254.1 L204.5 253.6 L205.0 253.0 L205.5 252.3 L206.0 251.3 L206.5 250.2 L207.0 248.8 L207.5 247.4 L208.0 245.8 L208.5 244.1 L209.0 242.4 L209.5 240.7 L210.0 239.0 L210.5 237.3 L211.0 235.7 L211.5 234.2 L212.0 232.9 L212.5 231.7 L213.0 230.7 L213.5 230.0 L214.0 229.4 L214.5 228.9 L215.0 228.5 L215.5 228.1 L216.0 227.7 L216.5 227.4 L217.0 227.1 L217.5 226.8 L218.0 226.5 L218.5 226.3 L219.0 226.0 L219.5 225.7 L220.0 225.5 L220.5 225.2 L221.0 224.9 L221.5 224.5 L222.0 224.1 L222.5 223.7 L223.0 223.2 L223.5 222.6 L224.0 222.0 L224.5 221.2 L225.0 220.1 L225.5 218.7 L226.0 217.1 L226.5 215.3 L227.0 213.3 L227.5 211.3 L228.0 209.2 L228.5 207.0 L229.0 204.9 L229.5 202.7 L230.0 200.7 L230.5 198.8 L231.0 197.0 L231.5 195.2 L232.0 193.3 L232.5 191.2 L233.0 189.1 L233.5 187.0 L234.0 184.9 L234.5 182.9 L235.0 181.1 L235.5 179.5 L236.0 178.1 L236.5 177.0 L237.0 176.3 L237.5 176.0 L238.0 176.1 L238.5 176.6 L239.0 177.3 L239.5 178.4 L240.0 179.6 L240.5 181.1 L241.0 182.8 L241.5 184.5 L242.0 186.4 L242.5 188.3 L243.0 190.2 L243.5 192.1 L244.0 194.0 L244.5 195.9 L245.0 197.9 L245.5 200.0 L246.0 202.2 L246.5 204.6 L247.0 207.1 L247.5 209.6 L248.0 212.3 L248.5 215.1 L249.0 218.0 L249.5 221.0 L250.0 224.1 L250.5 227.3 L251.0 230.6 L251.5 234.2 L252.0 238.2 L252.5 242.6 L253.0 247.3 L253.5 252.1 L254.0 257.0 L254.5 261.9 L255.0 266.7 L255.5 271.3 L256.0 275.6 L256.5 279.6 L257.0 284.2 L257.5 288.8 L258.0 292.9 L258.5 295.9 L259.0 297.0 L259.5 295.2 L260.0 290.1 L260.5 282.4 L261.0 272.9 L261.5 262.1 L262.0 250.9 L262.5 239.8 L263.0 229.5 L263.5 220.7 L264.0 214.1 L264.5 210.3 L265.0 208.9 L265.5 207.7 L266.0 206.5 L266.5 205.4 L267.0 204.4 L267.5 203.5 L268.0 202.6 L268.5 201.9 L269.0 201.2 L269.5 200.7 L270.0 200.2 L270.5 199.9 L271.0 199.6 L271.5 199.5 L272.0 199.4 L272.5 199.6 L273.0 200.0 L273.5 200.8 L274.0 201.7 L274.5 202.8 L275.0 204.1 L275.5 205.4 L276.0 206.8 L276.5 208.2 L277.0 209.6 L277.5 210.9 L278.0 212.0 L278.5 213.0 L279.0 214.0 L279.5 214.9 L280.0 215.7 L280.5 216.6 L281.0 217.5 L281.5 218.4 L282.0 219.4 L282.5 220.5 L283.0 221.7 L283.5 223.1 L284.0 224.6 L284.5 226.4 L285.0 229.5 L285.5 234.1 L286.0 239.5 L286.5 245.3 L287.0 250.7 L287.5 255.3 L288.0 258.5 L288.5 259.7 L289.0 258.7 L289.5 256.0 L290.0 251.9 L290.5 247.1 L291.0 241.9 L291.5 236.7 L292.0 232.0 L292.5 227.1 L293.0 221.2 L293.5 215.0 L294.0 208.9 L294.5 203.5 L295.0 199.2 L295.5 196.7 L296.0 196.4 L296.5 197.4 L297.0 199.2 L297.5 201.7 L298.0 204.7 L298.5 207.9 L299.0 211.2 L299.5 214.3 L300.0 217.0 L300.5 219.6 L301.0 222.6 L301.5 225.7 L302.0 228.9 L302.5 232.1 L303.0 235.0 L303.5 237.6 L304.0 239.7 L304.5 241.2 L305.0 241.9 L305.5 241.0 L306.0 235.1 L306.5 224.9 L307.0 211.8 L307.5 196.6 L308.0 180.7 L308.5 165.1 L309.0 151.0 L309.5 139.6 L310.0 131.8 L310.5 129.0 L311.0 131.8 L311.5 139.3 L312.0 150.8 L312.5 165.1 L313.0 181.3 L313.5 198.3 L314.0 215.3 L314.5 231.1 L315.0 244.8 L315.5 255.4 L316.0 262.0 L316.5 266.1 L317.0 270.0 L317.5 273.7 L318.0 277.2 L318.5 280.4 L319.0 283.3 L319.5 285.8 L320.0 287.9 L320.5 289.7 L321.0 290.9 L321.5 291.7 L322.0 292.0 L322.5 290.6 L323.0 286.8 L323.5 281.2 L324.0 274.4 L324.5 267.0 L325.0 259.6 L325.5 252.8 L326.0 247.2 L326.5 243.4 L327.0 242.0 L327.5 242.6 L328.0 244.2 L328.5 246.6 L329.0 249.7 L329.5 253.3 L330.0 257.2 L330.5 261.2 L331.0 265.1 L331.5 268.8 L332.0 272.0 L332.5 275.1 L333.0 278.4 L333.5 281.9 L334.0 285.6 L334.5 289.4 L335.0 293.2 L335.5 297.1 L336.0 300.9 L336.5 304.7 L337.0 308.4 L337.5 311.9 L338.0 315.3 L338.5 318.4 L339.0 321.2 L339.5 323.7 L340.0 325.9 L340.5 327.6 L341.0 328.9 L341.5 329.7 L342.0 330.0 L342.5 328.5 L343.0 324.4 L343.5 318.0 L344.0 309.8 L344.5 300.3 L345.0 289.8 L345.5 278.9 L346.0 267.9 L346.5 257.3 L347.0 247.4 L347.5 238.9 L348.0 232.0 L348.5 225.9 L349.0 219.7 L349.5 213.3 L350.0 207.1 L350.5 201.2 L351.0 195.7 L351.5 190.9 L352.0 186.8 L352.5 183.7 L353.0 181.7 L353.5 181.0 L354.0 182.9 L354.5 188.2 L355.0 196.1 L355.5 206.0 L356.0 217.3 L356.5 229.2 L357.0 241.0 L357.5 252.2 L358.0 262.0 L358.5 271.8 L359.0 282.9 L359.5 294.5 L360.0 305.9 L360.5 316.1 L361.0 324.4 L361.5 330.0 L362.0 332.0 L362.5 330.2 L363.0 325.3 L363.5 318.0 L364.0 308.8 L364.5 298.5 L365.0 287.8 L365.5 277.2 L366.0 267.5 L366.5 259.4 L367.0 253.4 L367.5 250.3 L368.0 250.4 L368.5 252.9 L369.0 257.0 L369.5 262.1 L370.0 267.7 L370.5 273.0 L371.0 277.6 L371.5 280.8 L372.0 282.0 L372.5 281.1 L373.0 278.7 L373.5 275.3 L374.0 271.1 L374.5 266.7 L375.0 262.5 L375.5 258.9 L376.0 256.3 L376.5 255.0 L377.0 257.7 L377.5 267.6 L378.0 283.2 L378.5 302.5 L379.0 323.8 L379.5 345.3 L380.0 365.2 L380.5 381.7 L381.0 392.9 L381.5 397.0 L382.0 395.5 L382.5 391.3 L383.0 385.1 L383.5 377.5 L384.0 368.9 L384.5 360.1 L385.0 351.5 L385.5 343.9 L386.0 337.7 L386.5 333.5 L387.0 332.0 L387.5 332.9 L388.0 335.4 L388.5 339.2 L389.0 343.9 L389.5 349.3 L390.0 355.0 L390.5 360.7 L391.0 366.1 L391.5 370.8 L392.0 374.6 L392.5 377.1 L393.0 378.0 L393.5 376.6 L394.0 372.7 L394.5 367.0 L395.0 360.0 L395.5 352.5 L396.0 345.0 L396.5 338.0 L397.0 332.3 L397.5 328.4 L398.0 327.0 L398.5 328.7 L399.0 333.3 L399.5 340.0 L400.0 348.1 L400.5 356.7 L401.0 365.3 L401.5 372.9 L402.0 378.9 L402.5 382.4 L403.0 382.1 L403.5 372.9 L404.0 357.1 L404.5 338.2 L405.0 320.0 L405.5 306.4 L406.0 301.0 L406.5 302.5 L407.0 306.8 L407.5 313.2 L408.0 321.4 L408.5 330.9 L409.0 341.2 L409.5 351.7 L410.0 362.1 L410.5 371.7 L411.0 380.3 L411.5 387.1 L412.0 391.8 L412.5 393.9 L413.0 392.5 L413.5 386.9 L414.0 378.1 L414.5 367.2 L415.0 355.0 L415.5 342.6 L416.0 331.1 L416.5 321.3 L417.0 314.3 L417.5 311.1 L418.0 312.7 L418.5 319.1 L419.0 329.0 L419.5 341.4 L420.0 355.1 L420.5 368.9 L421.0 381.6 L421.5 392.2 L422.0 399.4 L422.5 402.0 L423.0 399.1 L423.5 391.2 L424.0 379.6 L424.5 365.6 L425.0 350.5 L425.5 335.4 L426.0 321.8 L426.5 310.9 L427.0 303.9 L427.5 302.3 L428.0 310.9 L428.5 328.4 L429.0 350.7 L429.5 373.3 L430.0 392.2 L430.5 402.9 L431.0 401.8 L431.5 390.1 L432.0 371.7 L432.5 350.6 L433.0 330.7 L433.5 315.8 L434.0 310.0 L434.5 311.5 L435.0 315.9 L435.5 322.4 L436.0 330.8 L436.5 340.4 L437.0 350.7 L437.5 361.3 L438.0 371.6 L438.5 381.2 L439.0 389.6 L439.5 396.1 L440.0 400.5 L440.5 402.0 L441.0 399.3 L441.5 392.0 L442.0 381.2 L442.5 368.2 L443.0 354.1 L443.5 340.1 L444.0 327.4 L444.5 317.3 L445.0 310.8 L445.5 309.2 L446.0 314.6 L446.5 326.1 L447.0 341.8 L447.5 359.7 L448.0 377.7 L448.5 394.0 L449.0 406.6 L449.5 413.3 L450.0 413.7 L450.5 412.0 L451.0 409.1 L451.5 405.0 L452.0 400.1 L452.5 394.6 L453.0 388.7 L453.5 382.7 L454.0 376.7 L454.5 371.0 L455.0 365.9 L455.5 361.4 L456.0 358.0 L456.5 355.8 L457.0 355.0 L457.5 356.6 L458.0 360.8 L458.5 366.7 L459.0 373.5 L459.5 380.3 L460.0 386.2 L460.5 390.4 L461.0 392.0 L461.5 390.3 L462.0 386.4 L462.5 381.6 L463.0 377.7 L463.5 376.0 L464.0 378.2 L464.5 383.7 L465.0 391.1 L465.5 399.0 L466.0 405.8 L466.5 410.2 L467.0 410.6 L467.5 406.5 L468.0 398.4 L468.5 387.3 L469.0 373.7 L469.5 358.6 L470.0 342.6 L470.5 326.6 L471.0 311.2 L471.5 297.3 L472.0 285.6 L472.5 276.8 L473.0 271.9 L473.5 272.7 L474.0 289.7 L474.5 319.4 L475.0 355.2 L475.5 390.3 L476.0 418.0 L476.5 431.6 L477.0 431.4 L477.5 428.7 L478.0 422.9 L478.5 413.2 L479.0 398.7 L479.5 378.6 L480.0 352.0 L481.0 366.4 L482.2 405.0 L483.4 386.3 L485.8 407.8 L488.4 292.9 L490.4 414.0 L492.1 385.9 L493.9 418.3 L495.2 320.7 L497.0 422.1 L499.0 334.5 L501.7 423.6 L503.6 386.3 L505.7 424.8 L508.1 407.2 L510.8 425.2 L512.2 378.0 L514.7 429.9 L516.4 347.9 L519.4 430.1 L521.0 379.4 L523.7 429.2 L525.8 393.9 L527.5 431.8 L530.6 408.0 L532.3 431.2 L535.4 353.5 L538.0 430.8 L539.7 407.4 L542.3 433.8 L544.9 326.3 L548.0 433.6 L550.9 426.0 L552.5 431.7 L554.5 370.4 L556.3 432.6 L558.6 381.0 L561.0 432.6 L562.5 385.3 L565.2 434.2 L567.8 418.4 L569.3 433.5 L572.3 427.5 L573.8 434.9 L576.6 391.2 L579.7 433.5 L581.8 400.6 L583.3 434.1 L585.5 381.4 L586.9 432.2 L588.8 395.8 L590.6 433.4 L592.4 421.6 L594.3 434.2 L596.9 390.7" fill="none" stroke="#f0a24a" stroke-width="1.75" stroke-linejoin="round"/>
<path d="M168.0 434.0 L168.0 432.0 L168.5 430.3 L169.0 428.6 L169.5 426.9 L170.0 425.2 L170.5 423.4 L171.0 421.7 L171.5 419.9 L172.0 418.1 L172.5 416.3 L173.0 414.5 L173.5 412.6 L174.0 410.8 L174.5 408.9 L175.0 407.0 L175.5 405.2 L176.0 403.3 L176.5 401.3 L177.0 399.4 L177.5 397.5 L178.0 395.5 L178.5 393.6 L179.0 391.6 L179.5 389.6 L180.0 387.6 L180.5 385.6 L181.0 383.6 L181.5 381.5 L182.0 379.5 L182.5 377.4 L183.0 375.4 L183.5 373.3 L184.0 371.2 L184.5 369.1 L185.0 367.0 L185.5 364.9 L186.0 362.8 L186.5 360.6 L187.0 358.5 L187.5 356.3 L188.0 354.2 L188.5 352.0 L189.0 349.8 L189.5 347.6 L190.0 345.3 L190.5 343.0 L191.0 340.6 L191.5 338.2 L192.0 335.8 L192.5 333.4 L193.0 330.9 L193.5 328.5 L194.0 326.0 L194.5 323.5 L195.0 321.0 L195.5 318.5 L196.0 316.0 L196.5 313.5 L197.0 311.0 L197.5 308.5 L198.0 306.0 L198.5 303.5 L199.0 301.1 L199.5 298.7 L200.0 296.3 L200.5 293.9 L201.0 291.6 L201.5 289.3 L202.0 287.0 L202.5 284.8 L203.0 282.5 L203.5 280.3 L204.0 278.0 L204.5 275.8 L205.0 273.6 L205.5 271.4 L206.0 269.1 L206.5 266.9 L207.0 264.7 L207.5 262.5 L208.0 260.4 L208.5 258.2 L209.0 256.0 L209.5 253.9 L210.0 251.7 L210.5 249.6 L211.0 247.5 L211.5 245.5 L212.0 243.4 L212.5 241.4 L213.0 239.3 L213.5 237.4 L214.0 235.4 L214.5 233.4 L215.0 231.5 L215.5 229.6 L216.0 227.8 L216.5 225.9 L217.0 224.1 L217.5 222.4 L218.0 220.6 L218.5 218.9 L219.0 217.1 L219.5 215.4 L220.0 213.7 L220.5 212.0 L221.0 210.4 L221.5 208.8 L222.0 207.2 L222.5 205.6 L223.0 204.1 L223.5 202.6 L224.0 201.2 L224.5 199.8 L225.0 198.5 L225.5 197.2 L226.0 196.0 L226.5 194.8 L227.0 193.6 L227.5 192.3 L228.0 191.0 L228.5 189.7 L229.0 188.4 L229.5 187.2 L230.0 185.9 L230.5 184.8 L231.0 183.6 L231.5 182.6 L232.0 181.6 L232.5 180.7 L233.0 179.9 L233.5 179.3 L234.0 178.7 L234.5 178.3 L235.0 178.1 L235.5 178.0 L236.0 178.0 L236.5 178.2 L237.0 178.4 L237.5 178.7 L238.0 179.0 L238.5 179.5 L239.0 180.0 L239.5 180.5 L240.0 181.1 L240.5 181.8 L241.0 182.5 L241.5 183.2 L242.0 184.0 L242.5 185.0 L243.0 186.4 L243.5 188.1 L244.0 190.2 L244.5 192.6 L245.0 195.2 L245.5 198.2 L246.0 201.3 L246.5 204.7 L247.0 208.3 L247.5 212.0 L248.0 215.9 L248.5 219.9 L249.0 224.0 L249.5 228.8 L250.0 234.7 L250.5 241.6 L251.0 249.0 L251.5 256.8 L252.0 264.7 L252.5 272.5 L253.0 279.8 L253.5 286.4 L254.0 292.0 L254.5 297.1 L255.0 302.4 L255.5 307.7 L256.0 313.0 L256.5 318.3 L257.0 323.5 L257.5 328.6 L258.0 333.5 L258.5 338.1 L259.0 342.5 L259.5 346.6 L260.0 350.2 L260.5 353.5 L261.0 356.2 L261.5 358.5 L262.0 360.1 L262.5 361.1 L263.0 361.5 L263.5 361.3 L264.0 360.7 L264.5 359.6 L265.0 358.3 L265.5 356.6 L266.0 354.7 L266.5 352.5 L267.0 350.1 L267.5 347.5 L268.0 344.8 L268.5 342.0 L269.0 339.1 L269.5 336.2 L270.0 333.2 L270.5 330.3 L271.0 327.4 L271.5 324.6 L272.0 322.0 L272.5 319.4 L273.0 316.7 L273.5 313.9 L274.0 311.0 L274.5 308.0 L275.0 305.0 L275.5 301.9 L276.0 298.6 L276.5 295.4 L277.0 292.0 L277.5 288.6 L278.0 285.1 L278.5 281.5 L279.0 277.8 L279.5 274.0 L280.0 270.2 L280.5 266.3 L281.0 262.3 L281.5 258.2 L282.0 254.1 L282.5 249.8 L283.0 245.5 L283.5 241.1 L284.0 236.6 L284.5 232.0 L285.0 227.1 L285.5 221.8 L286.0 216.3 L286.5 210.7 L287.0 205.2 L287.5 199.9 L288.0 195.0 L288.5 190.3 L289.0 185.3 L289.5 180.3 L290.0 175.2 L290.5 170.2 L291.0 165.3 L291.5 160.5 L292.0 156.1 L292.5 151.9 L293.0 148.2 L293.5 145.0 L294.0 142.3 L294.5 140.3 L295.0 139.0 L295.5 138.1 L296.0 137.2 L296.5 136.4 L297.0 135.6 L297.5 134.8 L298.0 134.1 L298.5 133.4 L299.0 132.8 L299.5 132.1 L300.0 131.6 L300.5 131.0 L301.0 130.5 L301.5 130.1 L302.0 129.7 L302.5 129.3 L303.0 129.0 L303.5 128.7 L304.0 128.5 L304.5 128.3 L305.0 128.2 L305.5 128.1 L306.0 128.0 L306.5 128.0 L307.0 128.2 L307.5 128.6 L308.0 129.1 L308.5 129.8 L309.0 130.6 L309.5 131.5 L310.0 132.5 L310.5 133.5 L311.0 134.7 L311.5 135.8 L312.0 137.0 L312.5 138.3 L313.0 139.7 L313.5 141.3 L314.0 143.1 L314.5 145.1 L315.0 147.3 L315.5 149.7 L316.0 152.3 L316.5 155.0 L317.0 158.0 L317.5 161.2 L318.0 164.6 L318.5 168.2 L319.0 172.0 L319.5 177.0 L320.0 183.8 L320.5 191.9 L321.0 200.7 L321.5 209.7 L322.0 218.2 L322.5 225.9 L323.0 232.0 L323.5 237.4 L324.0 242.9 L324.5 248.2 L325.0 253.2 L325.5 257.5 L326.0 261.0 L326.5 263.2 L327.0 264.0 L327.5 263.8 L328.0 263.4 L328.5 262.6 L329.0 261.7 L329.5 260.6 L330.0 259.3 L330.5 258.0 L331.0 256.6 L331.5 255.3 L332.0 254.0 L332.5 252.8 L333.0 251.6 L333.5 250.5 L334.0 249.3 L334.5 248.0 L335.0 246.7 L335.5 245.2 L336.0 243.6 L336.5 241.8 L337.0 239.8 L337.5 237.5 L338.0 234.9 L338.5 232.0 L339.0 226.6 L339.5 217.2 L340.0 205.1 L340.5 191.5 L341.0 177.6 L341.5 164.6 L342.0 153.6 L342.5 145.9 L343.0 141.8 L343.5 138.2 L344.0 134.8 L344.5 131.7 L345.0 128.7 L345.5 126.1 L346.0 123.7 L346.5 121.6 L347.0 119.9 L347.5 118.5 L348.0 117.4 L348.5 116.8 L349.0 116.6 L349.5 116.8 L350.0 117.2 L350.5 118.0 L351.0 119.1 L351.5 120.5 L352.0 122.2 L352.5 124.2 L353.0 126.5 L353.5 129.1 L354.0 132.0 L354.5 140.5 L355.0 157.3 L355.5 178.7 L356.0 200.8 L356.5 219.8 L357.0 232.0 L357.5 238.9 L358.0 245.0 L358.5 250.3 L359.0 254.9 L359.5 259.0 L360.0 262.8 L360.5 266.4 L361.0 269.8 L361.5 273.3 L362.0 277.0 L362.5 281.0 L363.0 285.1 L363.5 289.5 L364.0 293.9 L364.5 298.2 L365.0 302.4 L365.5 306.3 L366.0 310.0 L366.5 313.2 L367.0 315.9 L367.5 318.0 L368.0 319.4 L368.5 320.0 L369.0 319.0 L369.5 315.1 L370.0 308.9 L370.5 300.9 L371.0 291.5 L371.5 281.5 L372.0 271.1 L372.5 261.1 L373.0 252.0 L373.5 242.3 L374.0 230.9 L374.5 218.4 L375.0 205.6 L375.5 193.4 L376.0 182.3 L376.5 173.3 L377.0 166.9 L377.5 164.1 L378.0 165.0 L378.5 168.8 L379.0 175.0 L379.5 183.0 L380.0 192.3 L380.5 202.4 L381.0 212.7 L381.5 222.7 L382.0 232.0 L382.5 241.7 L383.0 253.0 L383.5 265.6 L384.0 278.8 L384.5 292.3 L385.0 305.5 L385.5 318.0 L386.0 329.4 L386.5 339.0 L387.0 346.5 L387.5 351.3 L388.0 353.0 L388.5 352.2 L389.0 349.9 L389.5 346.3 L390.0 341.7 L390.5 336.2 L391.0 330.1 L391.5 323.5 L392.0 316.8 L392.5 310.0 L393.0 303.5 L393.5 297.4 L394.0 292.0 L394.5 286.9 L395.0 281.6 L395.5 276.3 L396.0 270.9 L396.5 265.5 L397.0 260.1 L397.5 254.9 L398.0 249.8 L398.5 245.0 L399.0 240.3 L399.5 236.0 L400.0 232.0 L400.5 228.0 L401.0 223.8 L401.5 219.5 L402.0 215.6 L402.5 212.3 L403.0 209.7 L403.5 208.3 L404.0 208.2 L404.5 210.5 L405.0 214.8 L405.5 220.6 L406.0 227.3 L406.5 234.3 L407.0 241.2 L407.5 247.2 L408.0 252.0 L408.5 256.1 L409.0 260.3 L409.5 264.5 L410.0 268.4 L410.5 271.8 L411.0 274.6 L411.5 276.4 L412.0 277.0 L412.5 274.9 L413.0 269.3 L413.5 260.8 L414.0 250.5 L414.5 239.0 L415.0 227.3 L415.5 216.2 L416.0 206.5 L416.5 199.1 L417.0 194.8 L417.5 194.3 L418.0 197.2 L418.5 202.9 L419.0 210.5 L419.5 219.5 L420.0 229.3 L420.5 239.0 L421.0 248.2 L421.5 256.1 L422.0 262.0 L422.5 266.9 L423.0 271.9 L423.5 276.6 L424.0 280.4 L424.5 283.0 L425.0 284.0 L425.5 281.0 L426.0 272.8 L426.5 260.8 L427.0 246.5 L427.5 231.3 L428.0 216.5 L428.5 203.6 L429.0 194.0 L429.5 186.3 L430.0 178.5 L430.5 171.0 L431.0 164.0 L431.5 158.0 L432.0 153.2 L432.5 150.1 L433.0 149.0 L433.5 151.8 L434.0 159.2 L434.5 170.1 L435.0 183.1 L435.5 197.1 L436.0 210.7 L436.5 222.8 L437.0 232.0 L437.5 239.7 L438.0 247.6 L438.5 255.0 L439.0 261.2 L439.5 265.4 L440.0 267.0 L440.5 264.5 L441.0 257.7 L441.5 247.9 L442.0 236.3 L442.5 224.3 L443.0 213.0 L443.5 203.7 L444.0 197.7 L444.5 196.1 L445.0 197.9 L445.5 202.1 L446.0 208.0 L446.5 215.1 L447.0 222.9 L447.5 230.8 L448.0 238.3 L448.5 244.9 L449.0 250.0 L449.5 254.4 L450.0 258.9 L450.5 263.1 L451.0 266.7 L451.5 269.1 L452.0 270.0 L452.5 266.4 L453.0 256.8 L453.5 243.5 L454.0 228.5 L454.5 213.9 L455.0 201.8 L455.5 194.4 L456.0 193.7 L456.5 199.9 L457.0 209.5 L457.5 218.2 L458.0 222.0 L458.5 219.6 L459.0 213.6 L459.5 205.8 L460.0 198.0 L460.5 192.0 L461.0 189.6 L461.5 190.4 L462.0 192.8 L462.5 196.3 L463.0 200.8 L463.5 206.0 L464.0 211.6 L464.5 217.2 L465.0 222.7 L465.5 227.7 L466.0 232.0 L466.5 236.1 L467.0 240.5 L467.5 245.2 L468.0 249.8 L468.5 254.3 L469.0 258.4 L469.5 261.9 L470.0 264.6 L470.5 266.4 L471.0 267.0 L471.5 266.7 L472.0 265.9 L472.5 264.6 L473.0 263.0 L473.5 261.1 L474.0 259.0 L474.5 256.7 L475.0 254.4 L475.5 252.2 L476.0 250.0 L476.5 247.7 L477.0 244.9 L477.5 241.8 L478.0 238.3 L478.5 234.7 L479.0 231.0 L479.5 227.2 L480.0 223.5 L480.5 220.0 L481.0 216.6 L481.5 213.6 L482.0 211.0 L482.5 208.8 L483.0 207.2 L483.5 206.2 L484.0 206.1 L484.5 207.8 L485.0 211.5 L485.5 216.1 L486.0 221.0 L486.5 225.2 L487.0 228.0 L487.5 229.7 L488.0 231.4 L488.5 232.8 L489.0 234.0 L489.5 234.7 L490.0 235.0 L491.0 274.3 L494.8 303.7 L496.8 307.8 L499.9 323.9 L502.2 292.4 L504.6 331.5 L508.2 284.1 L510.3 324.4 L514.1 290.5 L515.6 333.3 L517.6 293.7 L520.5 339.6 L521.8 289.5 L523.5 334.9 L525.7 294.4 L528.1 328.7 L531.3 338.0 L534.1 345.0 L535.6 298.4 L538.2 345.6 L540.9 312.7 L544.2 336.7 L546.9 338.3 L548.9 340.7 L551.2 320.2 L555.0 333.1 L557.6 301.5 L561.0 348.1 L562.6 322.5 L566.1 350.5 L568.0 297.1 L569.7 334.5 L571.6 314.6 L575.4 349.7 L577.8 295.0 L579.8 352.0 L582.8 303.5 L585.3 356.6 L588.2 354.6 L589.7 355.2 L593.3 317.1 L595.6 366.9 L597.3 336.3 L599.9 362.1 L601.5 325.1 L604.4 359.8 L606.9 371.7 L609.7 370.3 L611.0 376.7 L613.4 363.5 L615.9 343.4 L618.6 382.3 L620.7 388.3 L622.3 381.5 L625.3 386.4 L628.4 390.4 L632.2 378.0 L634.9 420.1 L636.4 395.9 L640.0 422.0 L642.0 406.9 L644.4 421.9 L646.8 418.3 L649.1 420.0 L652.6 419.4 L654.8 424.4 L657.1 418.2 L659.7 428.9 L661.1 422.8 L664.0 432.0 L664.0 434.0 Z" fill="rgb(150,186,30)" fill-opacity="0.55"/><path d="M168.0 432.0 L168.0 432.0 L168.5 430.3 L169.0 428.6 L169.5 426.9 L170.0 425.2 L170.5 423.4 L171.0 421.7 L171.5 419.9 L172.0 418.1 L172.5 416.3 L173.0 414.5 L173.5 412.6 L174.0 410.8 L174.5 408.9 L175.0 407.0 L175.5 405.2 L176.0 403.3 L176.5 401.3 L177.0 399.4 L177.5 397.5 L178.0 395.5 L178.5 393.6 L179.0 391.6 L179.5 389.6 L180.0 387.6 L180.5 385.6 L181.0 383.6 L181.5 381.5 L182.0 379.5 L182.5 377.4 L183.0 375.4 L183.5 373.3 L184.0 371.2 L184.5 369.1 L185.0 367.0 L185.5 364.9 L186.0 362.8 L186.5 360.6 L187.0 358.5 L187.5 356.3 L188.0 354.2 L188.5 352.0 L189.0 349.8 L189.5 347.6 L190.0 345.3 L190.5 343.0 L191.0 340.6 L191.5 338.2 L192.0 335.8 L192.5 333.4 L193.0 330.9 L193.5 328.5 L194.0 326.0 L194.5 323.5 L195.0 321.0 L195.5 318.5 L196.0 316.0 L196.5 313.5 L197.0 311.0 L197.5 308.5 L198.0 306.0 L198.5 303.5 L199.0 301.1 L199.5 298.7 L200.0 296.3 L200.5 293.9 L201.0 291.6 L201.5 289.3 L202.0 287.0 L202.5 284.8 L203.0 282.5 L203.5 280.3 L204.0 278.0 L204.5 275.8 L205.0 273.6 L205.5 271.4 L206.0 269.1 L206.5 266.9 L207.0 264.7 L207.5 262.5 L208.0 260.4 L208.5 258.2 L209.0 256.0 L209.5 253.9 L210.0 251.7 L210.5 249.6 L211.0 247.5 L211.5 245.5 L212.0 243.4 L212.5 241.4 L213.0 239.3 L213.5 237.4 L214.0 235.4 L214.5 233.4 L215.0 231.5 L215.5 229.6 L216.0 227.8 L216.5 225.9 L217.0 224.1 L217.5 222.4 L218.0 220.6 L218.5 218.9 L219.0 217.1 L219.5 215.4 L220.0 213.7 L220.5 212.0 L221.0 210.4 L221.5 208.8 L222.0 207.2 L222.5 205.6 L223.0 204.1 L223.5 202.6 L224.0 201.2 L224.5 199.8 L225.0 198.5 L225.5 197.2 L226.0 196.0 L226.5 194.8 L227.0 193.6 L227.5 192.3 L228.0 191.0 L228.5 189.7 L229.0 188.4 L229.5 187.2 L230.0 185.9 L230.5 184.8 L231.0 183.6 L231.5 182.6 L232.0 181.6 L232.5 180.7 L233.0 179.9 L233.5 179.3 L234.0 178.7 L234.5 178.3 L235.0 178.1 L235.5 178.0 L236.0 178.0 L236.5 178.2 L237.0 178.4 L237.5 178.7 L238.0 179.0 L238.5 179.5 L239.0 180.0 L239.5 180.5 L240.0 181.1 L240.5 181.8 L241.0 182.5 L241.5 183.2 L242.0 184.0 L242.5 185.0 L243.0 186.4 L243.5 188.1 L244.0 190.2 L244.5 192.6 L245.0 195.2 L245.5 198.2 L246.0 201.3 L246.5 204.7 L247.0 208.3 L247.5 212.0 L248.0 215.9 L248.5 219.9 L249.0 224.0 L249.5 228.8 L250.0 234.7 L250.5 241.6 L251.0 249.0 L251.5 256.8 L252.0 264.7 L252.5 272.5 L253.0 279.8 L253.5 286.4 L254.0 292.0 L254.5 297.1 L255.0 302.4 L255.5 307.7 L256.0 313.0 L256.5 318.3 L257.0 323.5 L257.5 328.6 L258.0 333.5 L258.5 338.1 L259.0 342.5 L259.5 346.6 L260.0 350.2 L260.5 353.5 L261.0 356.2 L261.5 358.5 L262.0 360.1 L262.5 361.1 L263.0 361.5 L263.5 361.3 L264.0 360.7 L264.5 359.6 L265.0 358.3 L265.5 356.6 L266.0 354.7 L266.5 352.5 L267.0 350.1 L267.5 347.5 L268.0 344.8 L268.5 342.0 L269.0 339.1 L269.5 336.2 L270.0 333.2 L270.5 330.3 L271.0 327.4 L271.5 324.6 L272.0 322.0 L272.5 319.4 L273.0 316.7 L273.5 313.9 L274.0 311.0 L274.5 308.0 L275.0 305.0 L275.5 301.9 L276.0 298.6 L276.5 295.4 L277.0 292.0 L277.5 288.6 L278.0 285.1 L278.5 281.5 L279.0 277.8 L279.5 274.0 L280.0 270.2 L280.5 266.3 L281.0 262.3 L281.5 258.2 L282.0 254.1 L282.5 249.8 L283.0 245.5 L283.5 241.1 L284.0 236.6 L284.5 232.0 L285.0 227.1 L285.5 221.8 L286.0 216.3 L286.5 210.7 L287.0 205.2 L287.5 199.9 L288.0 195.0 L288.5 190.3 L289.0 185.3 L289.5 180.3 L290.0 175.2 L290.5 170.2 L291.0 165.3 L291.5 160.5 L292.0 156.1 L292.5 151.9 L293.0 148.2 L293.5 145.0 L294.0 142.3 L294.5 140.3 L295.0 139.0 L295.5 138.1 L296.0 137.2 L296.5 136.4 L297.0 135.6 L297.5 134.8 L298.0 134.1 L298.5 133.4 L299.0 132.8 L299.5 132.1 L300.0 131.6 L300.5 131.0 L301.0 130.5 L301.5 130.1 L302.0 129.7 L302.5 129.3 L303.0 129.0 L303.5 128.7 L304.0 128.5 L304.5 128.3 L305.0 128.2 L305.5 128.1 L306.0 128.0 L306.5 128.0 L307.0 128.2 L307.5 128.6 L308.0 129.1 L308.5 129.8 L309.0 130.6 L309.5 131.5 L310.0 132.5 L310.5 133.5 L311.0 134.7 L311.5 135.8 L312.0 137.0 L312.5 138.3 L313.0 139.7 L313.5 141.3 L314.0 143.1 L314.5 145.1 L315.0 147.3 L315.5 149.7 L316.0 152.3 L316.5 155.0 L317.0 158.0 L317.5 161.2 L318.0 164.6 L318.5 168.2 L319.0 172.0 L319.5 177.0 L320.0 183.8 L320.5 191.9 L321.0 200.7 L321.5 209.7 L322.0 218.2 L322.5 225.9 L323.0 232.0 L323.5 237.4 L324.0 242.9 L324.5 248.2 L325.0 253.2 L325.5 257.5 L326.0 261.0 L326.5 263.2 L327.0 264.0 L327.5 263.8 L328.0 263.4 L328.5 262.6 L329.0 261.7 L329.5 260.6 L330.0 259.3 L330.5 258.0 L331.0 256.6 L331.5 255.3 L332.0 254.0 L332.5 252.8 L333.0 251.6 L333.5 250.5 L334.0 249.3 L334.5 248.0 L335.0 246.7 L335.5 245.2 L336.0 243.6 L336.5 241.8 L337.0 239.8 L337.5 237.5 L338.0 234.9 L338.5 232.0 L339.0 226.6 L339.5 217.2 L340.0 205.1 L340.5 191.5 L341.0 177.6 L341.5 164.6 L342.0 153.6 L342.5 145.9 L343.0 141.8 L343.5 138.2 L344.0 134.8 L344.5 131.7 L345.0 128.7 L345.5 126.1 L346.0 123.7 L346.5 121.6 L347.0 119.9 L347.5 118.5 L348.0 117.4 L348.5 116.8 L349.0 116.6 L349.5 116.8 L350.0 117.2 L350.5 118.0 L351.0 119.1 L351.5 120.5 L352.0 122.2 L352.5 124.2 L353.0 126.5 L353.5 129.1 L354.0 132.0 L354.5 140.5 L355.0 157.3 L355.5 178.7 L356.0 200.8 L356.5 219.8 L357.0 232.0 L357.5 238.9 L358.0 245.0 L358.5 250.3 L359.0 254.9 L359.5 259.0 L360.0 262.8 L360.5 266.4 L361.0 269.8 L361.5 273.3 L362.0 277.0 L362.5 281.0 L363.0 285.1 L363.5 289.5 L364.0 293.9 L364.5 298.2 L365.0 302.4 L365.5 306.3 L366.0 310.0 L366.5 313.2 L367.0 315.9 L367.5 318.0 L368.0 319.4 L368.5 320.0 L369.0 319.0 L369.5 315.1 L370.0 308.9 L370.5 300.9 L371.0 291.5 L371.5 281.5 L372.0 271.1 L372.5 261.1 L373.0 252.0 L373.5 242.3 L374.0 230.9 L374.5 218.4 L375.0 205.6 L375.5 193.4 L376.0 182.3 L376.5 173.3 L377.0 166.9 L377.5 164.1 L378.0 165.0 L378.5 168.8 L379.0 175.0 L379.5 183.0 L380.0 192.3 L380.5 202.4 L381.0 212.7 L381.5 222.7 L382.0 232.0 L382.5 241.7 L383.0 253.0 L383.5 265.6 L384.0 278.8 L384.5 292.3 L385.0 305.5 L385.5 318.0 L386.0 329.4 L386.5 339.0 L387.0 346.5 L387.5 351.3 L388.0 353.0 L388.5 352.2 L389.0 349.9 L389.5 346.3 L390.0 341.7 L390.5 336.2 L391.0 330.1 L391.5 323.5 L392.0 316.8 L392.5 310.0 L393.0 303.5 L393.5 297.4 L394.0 292.0 L394.5 286.9 L395.0 281.6 L395.5 276.3 L396.0 270.9 L396.5 265.5 L397.0 260.1 L397.5 254.9 L398.0 249.8 L398.5 245.0 L399.0 240.3 L399.5 236.0 L400.0 232.0 L400.5 228.0 L401.0 223.8 L401.5 219.5 L402.0 215.6 L402.5 212.3 L403.0 209.7 L403.5 208.3 L404.0 208.2 L404.5 210.5 L405.0 214.8 L405.5 220.6 L406.0 227.3 L406.5 234.3 L407.0 241.2 L407.5 247.2 L408.0 252.0 L408.5 256.1 L409.0 260.3 L409.5 264.5 L410.0 268.4 L410.5 271.8 L411.0 274.6 L411.5 276.4 L412.0 277.0 L412.5 274.9 L413.0 269.3 L413.5 260.8 L414.0 250.5 L414.5 239.0 L415.0 227.3 L415.5 216.2 L416.0 206.5 L416.5 199.1 L417.0 194.8 L417.5 194.3 L418.0 197.2 L418.5 202.9 L419.0 210.5 L419.5 219.5 L420.0 229.3 L420.5 239.0 L421.0 248.2 L421.5 256.1 L422.0 262.0 L422.5 266.9 L423.0 271.9 L423.5 276.6 L424.0 280.4 L424.5 283.0 L425.0 284.0 L425.5 281.0 L426.0 272.8 L426.5 260.8 L427.0 246.5 L427.5 231.3 L428.0 216.5 L428.5 203.6 L429.0 194.0 L429.5 186.3 L430.0 178.5 L430.5 171.0 L431.0 164.0 L431.5 158.0 L432.0 153.2 L432.5 150.1 L433.0 149.0 L433.5 151.8 L434.0 159.2 L434.5 170.1 L435.0 183.1 L435.5 197.1 L436.0 210.7 L436.5 222.8 L437.0 232.0 L437.5 239.7 L438.0 247.6 L438.5 255.0 L439.0 261.2 L439.5 265.4 L440.0 267.0 L440.5 264.5 L441.0 257.7 L441.5 247.9 L442.0 236.3 L442.5 224.3 L443.0 213.0 L443.5 203.7 L444.0 197.7 L444.5 196.1 L445.0 197.9 L445.5 202.1 L446.0 208.0 L446.5 215.1 L447.0 222.9 L447.5 230.8 L448.0 238.3 L448.5 244.9 L449.0 250.0 L449.5 254.4 L450.0 258.9 L450.5 263.1 L451.0 266.7 L451.5 269.1 L452.0 270.0 L452.5 266.4 L453.0 256.8 L453.5 243.5 L454.0 228.5 L454.5 213.9 L455.0 201.8 L455.5 194.4 L456.0 193.7 L456.5 199.9 L457.0 209.5 L457.5 218.2 L458.0 222.0 L458.5 219.6 L459.0 213.6 L459.5 205.8 L460.0 198.0 L460.5 192.0 L461.0 189.6 L461.5 190.4 L462.0 192.8 L462.5 196.3 L463.0 200.8 L463.5 206.0 L464.0 211.6 L464.5 217.2 L465.0 222.7 L465.5 227.7 L466.0 232.0 L466.5 236.1 L467.0 240.5 L467.5 245.2 L468.0 249.8 L468.5 254.3 L469.0 258.4 L469.5 261.9 L470.0 264.6 L470.5 266.4 L471.0 267.0 L471.5 266.7 L472.0 265.9 L472.5 264.6 L473.0 263.0 L473.5 261.1 L474.0 259.0 L474.5 256.7 L475.0 254.4 L475.5 252.2 L476.0 250.0 L476.5 247.7 L477.0 244.9 L477.5 241.8 L478.0 238.3 L478.5 234.7 L479.0 231.0 L479.5 227.2 L480.0 223.5 L480.5 220.0 L481.0 216.6 L481.5 213.6 L482.0 211.0 L482.5 208.8 L483.0 207.2 L483.5 206.2 L484.0 206.1 L484.5 207.8 L485.0 211.5 L485.5 216.1 L486.0 221.0 L486.5 225.2 L487.0 228.0 L487.5 229.7 L488.0 231.4 L488.5 232.8 L489.0 234.0 L489.5 234.7 L490.0 235.0 L491.0 274.3 L494.8 303.7 L496.8 307.8 L499.9 323.9 L502.2 292.4 L504.6 331.5 L508.2 284.1 L510.3 324.4 L514.1 290.5 L515.6 333.3 L517.6 293.7 L520.5 339.6 L521.8 289.5 L523.5 334.9 L525.7 294.4 L528.1 328.7 L531.3 338.0 L534.1 345.0 L535.6 298.4 L538.2 345.6 L540.9 312.7 L544.2 336.7 L546.9 338.3 L548.9 340.7 L551.2 320.2 L555.0 333.1 L557.6 301.5 L561.0 348.1 L562.6 322.5 L566.1 350.5 L568.0 297.1 L569.7 334.5 L571.6 314.6 L575.4 349.7 L577.8 295.0 L579.8 352.0 L582.8 303.5 L585.3 356.6 L588.2 354.6 L589.7 355.2 L593.3 317.1 L595.6 366.9 L597.3 336.3 L599.9 362.1 L601.5 325.1 L604.4 359.8 L606.9 371.7 L609.7 370.3 L611.0 376.7 L613.4 363.5 L615.9 343.4 L618.6 382.3 L620.7 388.3 L622.3 381.5 L625.3 386.4 L628.4 390.4 L632.2 378.0 L634.9 420.1 L636.4 395.9 L640.0 422.0 L642.0 406.9 L644.4 421.9 L646.8 418.3 L649.1 420.0 L652.6 419.4 L654.8 424.4 L657.1 418.2 L659.7 428.9 L661.1 422.8" fill="none" stroke="#8ed820" stroke-width="1.75" stroke-linejoin="round"/>
</svg>
</div>
<div class="tick" style="left:709px;top:68px;width:8px"></div>
<div class="tick" style="left:709px;top:76px;width:4px"></div>
<div class="tick" style="left:709px;top:84px;width:4px"></div>
<div class="tick" style="left:709px;top:92px;width:5px"></div>
<div class="tick" style="left:709px;top:100px;width:4px"></div>
<div class="tick" style="left:709px;top:108px;width:4px"></div>
<div class="tick" style="left:709px;top:116px;width:5px"></div>
<div class="tick" style="left:709px;top:124px;width:4px"></div>
<div class="tick" style="left:709px;top:132px;width:4px"></div>
<div class="tick" style="left:709px;top:140px;width:5px"></div>
<div class="tick" style="left:709px;top:148px;width:4px"></div>
<div class="tick" style="left:709px;top:156px;width:4px"></div>
<div class="tick" style="left:709px;top:164px;width:5px"></div>
<div class="tick" style="left:709px;top:172px;width:4px"></div>
<div class="tick" style="left:709px;top:180px;width:4px"></div>
<div class="tick" style="left:709px;top:188px;width:5px"></div>
<div class="tick" style="left:709px;top:196px;width:4px"></div>
<div class="tick" style="left:709px;top:204px;width:4px"></div>
<div class="tick" style="left:709px;top:212px;width:5px"></div>
<div class="tick" style="left:709px;top:220px;width:4px"></div>
<div class="tick" style="left:709px;top:228px;width:4px"></div>
<div class="tick" style="left:709px;top:236px;width:5px"></div>
<div class="tick" style="left:709px;top:244px;width:4px"></div>
<div class="tick" style="left:709px;top:252px;width:4px"></div>
<div class="tick" style="left:709px;top:259px;width:5px"></div>
<div class="tick" style="left:709px;top:267px;width:4px"></div>
<div class="tick" style="left:709px;top:275px;width:4px"></div>
<div class="tick" style="left:709px;top:283px;width:5px"></div>
<div class="tick" style="left:709px;top:291px;width:4px"></div>
<div class="tick" style="left:709px;top:299px;width:4px"></div>
<div class="tick" style="left:709px;top:307px;width:5px"></div>
<div class="tick" style="left:709px;top:315px;width:4px"></div>
<div class="tick" style="left:709px;top:323px;width:4px"></div>
<div class="tick" style="left:709px;top:331px;width:5px"></div>
<div class="tick" style="left:709px;top:339px;width:4px"></div>
<div class="tick" style="left:709px;top:347px;width:4px"></div>
<div class="tick" style="left:709px;top:355px;width:5px"></div>
<div class="tick" style="left:709px;top:363px;width:4px"></div>
<div class="tick" style="left:709px;top:371px;width:4px"></div>
<div class="tick" style="left:709px;top:379px;width:5px"></div>
<div class="tick" style="left:709px;top:387px;width:4px"></div>
<div class="tick" style="left:709px;top:395px;width:4px"></div>
<div class="tick" style="left:709px;top:403px;width:5px"></div>
<div class="tick" style="left:709px;top:411px;width:4px"></div>
<div class="tick" style="left:709px;top:419px;width:4px"></div>
<div class="tick" style="left:709px;top:427px;width:5px"></div>
<div class="tick" style="left:709px;top:435px;width:4px"></div>
<div class="tick" style="left:709px;top:443px;width:4px"></div>
<div class="tick" style="left:709px;top:451px;width:5px"></div>
<div class="tick" style="left:709px;top:459px;width:4px"></div>
<div class="tick" style="left:709px;top:467px;width:4px"></div>
<div class="tick" style="left:709px;top:475px;width:5px"></div>
<div class="tick" style="left:709px;top:483px;width:4px"></div>
<div class="tick" style="left:709px;top:491px;width:4px"></div>
<div class="tick" style="left:709px;top:499px;width:8px"></div>
<div class="vtick" style="left:18px;top:503px;height:5px"></div>
<div class="vtick" style="left:58px;top:503px;height:5px"></div>
<div class="vtick" style="left:87px;top:503px;height:5px"></div>
<div class="vtick" style="left:109px;top:503px;height:5px"></div>
<div class="vtick" style="left:127px;top:503px;height:5px"></div>
<div class="vtick" style="left:142px;top:503px;height:5px"></div>
<div class="vtick" style="left:156px;top:503px;height:5px"></div>
<div class="vtick" style="left:167px;top:503px;height:5px"></div>
<div class="vtick" style="left:178px;top:503px;height:5px"></div>
<div class="vtick" style="left:247px;top:503px;height:5px"></div>
<div class="vtick" style="left:287px;top:503px;height:5px"></div>
<div class="vtick" style="left:316px;top:503px;height:5px"></div>
<div class="vtick" style="left:338px;top:503px;height:5px"></div>
<div class="vtick" style="left:356px;top:503px;height:5px"></div>
<div class="vtick" style="left:371px;top:503px;height:5px"></div>
<div class="vtick" style="left:385px;top:503px;height:5px"></div>
<div class="vtick" style="left:396px;top:503px;height:5px"></div>
<div class="vtick" style="left:407px;top:503px;height:5px"></div>
<div class="vtick" style="left:476px;top:503px;height:5px"></div>
<div class="vtick" style="left:516px;top:503px;height:5px"></div>
<div class="vtick" style="left:545px;top:503px;height:5px"></div>
<div class="vtick" style="left:567px;top:503px;height:5px"></div>
<div class="vtick" style="left:585px;top:503px;height:5px"></div>
<div class="vtick" style="left:600px;top:503px;height:5px"></div>
<div class="vtick" style="left:614px;top:503px;height:5px"></div>
<div class="vtick" style="left:625px;top:503px;height:5px"></div>
<div class="vtick" style="left:636px;top:503px;height:5px"></div>
<div class="vtick" style="left:705px;top:503px;height:5px"></div>

<!-- scrollbars -->
<div class="a" style="left:738px;top:84px;width:18px;height:420px;border-radius:3px;background:linear-gradient(90deg,#cdc6a8,#d6cfb2);box-shadow:inset 0 0 0 1px #b4ac8f"></div>
<div class="b" style="left:737px;top:64px;width:20px;height:20px"><svg width="18" height="18" style="position:absolute;left:0;top:0"><path d="M2.6 13.8h13.2l-6.6-9.6z" fill="#111"/></svg></div>
<div class="th" style="left:738px;top:85px;width:18px;height:11px;background:linear-gradient(90deg,#ebe5cc 0 50%,#dcd5b8 50%,#efe9d2 75%,#d8d1b3)"></div>
<div class="th" style="left:738px;top:491px;width:18px;height:11px;background:linear-gradient(90deg,#ebe5cc 0 50%,#dcd5b8 50%,#efe9d2 75%,#d8d1b3)"></div>
<div class="b" style="left:737px;top:503px;width:20px;height:20px"><svg width="18" height="18" style="position:absolute;left:0;top:0"><path d="M2.6 4.6h13.2l-6.6 9.6z" fill="#111"/></svg></div>
<div class="b" style="left:737px;top:526px;width:20px;height:19px"><svg width="18" height="17" style="position:absolute;left:0;top:0"><path d="M9 2.5l6 5.7-6 5.7-6-5.7z" fill="#111"/></svg></div>

<div class="a" style="left:28px;top:527px;width:690px;height:17px;border-radius:3px;background:linear-gradient(#d6cfb2,#cdc6a8);box-shadow:inset 0 0 0 1px #b4ac8f"></div>
<div class="b" style="left:10px;top:526px;width:19px;height:19px"><svg width="17" height="17" style="position:absolute;left:0;top:0"><path d="M13 2.1v12.6l-9-6.3z" fill="#111"/></svg></div>
<div class="th" style="left:30px;top:526px;width:11px;height:18px;background:linear-gradient(#ebe5cc 0 50%,#dcd5b8 50%,#d8d1b3)"></div>
<div class="th" style="left:704px;top:527px;width:11px;height:17px;background:linear-gradient(#ebe5cc 0 50%,#dcd5b8 50%,#d8d1b3)"></div>
<div class="b" style="left:715px;top:526px;width:19px;height:19px"><svg width="17" height="17" style="position:absolute;left:0;top:0"><path d="M4.9 2.1v12.6l9-6.3z" fill="#111"/></svg></div>

<!-- statistics panel -->
<div class="pb stripe" style="left:6px;top:552px;width:553px;height:67px;box-shadow:inset 1px 1px 0 #e0d9be, inset -1px -1px 0 #ddd6ba, 0 0 0 1px #5f5a3d"></div>
<div class="a" style="left:6px;top:575px;width:70px;height:14px;border-radius:5px 0 0 0;box-shadow:inset 1px 1px 0 #e4ddc2"></div>
<div class="tab" style="left:6px;top:552px;width:73px;height:23px"></div>
<div class="b" style="left:370px;top:556px;width:44px;height:20px"></div>
<div class="b" style="left:482px;top:556px;width:48px;height:20px"></div>
<div class="b" style="left:534px;top:556px;width:21px;height:20px;background:linear-gradient(#f8e57c,#eed350);border-color:#a89a50"></div>

<!-- correlation panel -->
<div class="pb stripe" style="left:562px;top:552px;width:199px;height:67px;box-shadow:inset 1px 1px 0 #e0d9be, inset -1px -1px 0 #ddd6ba, 0 0 0 1px #5f5a3d"></div>
<div class="a" style="left:562px;top:575px;width:70px;height:14px;border-radius:5px 0 0 0;box-shadow:inset 1px 1px 0 #e4ddc2"></div>
<div class="tab" style="left:562px;top:552px;width:125px;height:23px"></div>
<div class="a" style="left:577px;top:583px;width:169px;height:13px;border-radius:4px;background:linear-gradient(90deg,#3b2d12,#35301a 45%,#303a14 60%,#2e3a12);box-shadow:inset 0 1px 2px rgba(0,0,0,.5), 0 1px 0 rgba(255,255,240,.4)"></div>
<div class="a" style="left:651px;top:584px;width:12px;height:11px;background:linear-gradient(90deg,#a89818,#e8dc34 15%,#f0e43c 35%,#8a7c14 45%,#8a7c14 55%,#f0e43c 65%,#e8dc34 85%,#a89818)"></div>


<!-- out panel -->
<div class="pb stripe" style="left:763px;top:34px;width:89px;height:585px;box-shadow:inset 1px 1px 0 #e0d9be, inset -1px -1px 0 #ddd6ba, 0 0 0 1px #5f5a3d"></div>
<div class="a" style="left:763px;top:58px;width:40px;height:14px;border-radius:5px 0 0 0;box-shadow:inset 1px 1px 0 #e4ddc2"></div>
<div class="tab" style="left:763px;top:34px;width:39px;height:23px"></div>
<div class="a" style="left:799px;top:70px;width:44px;height:532px;border-radius:3px;background:linear-gradient(#2c1c0c,#30220e 10%,#383012 20%,#3b3614 30%,#3b3815);box-shadow:0 0 1px 1px rgba(60,50,20,.35)"></div>
<div class="a" style="left:799px;top:71px;width:44px;height:144px;background:repeating-linear-gradient(rgba(0,0,0,0) 0 3px,rgba(0,0,0,.12) 3px 4px)"></div>
<div class="a" style="left:799px;top:211.0px;width:22px;height:3px;background:#8c7c1c"></div>
<div class="a" style="left:799px;top:215.0px;width:22px;height:387.0px;background:linear-gradient(rgb(244,214,44) -0.1%,rgb(236,212,30) 6.2%,rgb(214,210,20) 12.4%,rgb(192,208,16) 18.6%,rgb(168,200,16) 24.9%,rgb(144,192,16) 31.1%,rgb(112,184,16) 37.3%,rgb(82,170,16) 49.8%,rgb(66,168,16) 68.5%,rgb(58,170,20) 99.6%);border-radius:0 0 2px 2px"></div>
<div class="a" style="left:799px;top:215.0px;width:22px;height:387.0px;background:repeating-linear-gradient(rgba(255,255,200,.08) 0 1px,rgba(0,0,0,0) 1px 2.6px,rgba(10,50,0,.38) 2.6px 4px)"></div>
<div class="a" style="left:821px;top:215.0px;width:22px;height:3px;background:#8c7c1c"></div>
<div class="a" style="left:821px;top:219.0px;width:22px;height:383.0px;background:linear-gradient(rgb(244,214,44) -1.1%,rgb(236,212,30) 5.2%,rgb(214,210,20) 11.5%,rgb(192,208,16) 17.8%,rgb(168,200,16) 24.1%,rgb(144,192,16) 30.4%,rgb(112,184,16) 36.7%,rgb(82,170,16) 49.3%,rgb(66,168,16) 68.2%,rgb(58,170,20) 99.6%);border-radius:0 0 2px 2px"></div>
<div class="a" style="left:821px;top:219.0px;width:22px;height:383.0px;background:repeating-linear-gradient(rgba(255,255,200,.08) 0 1px,rgba(0,0,0,0) 1px 2.6px,rgba(10,50,0,.38) 2.6px 4px)"></div>
<div class="a" style="left:820px;top:70px;width:1px;height:532px;background:rgba(10,40,0,.4)"></div>
<div class="a" style="left:799px;top:155px;width:21px;height:4px;background:#f4f2ec"></div>
<div class="a" style="left:821px;top:175px;width:22px;height:4px;background:#f4f2ec"></div>
<div class="tick" style="left:788px;top:69px;width:8px"></div>
<div class="tick" style="left:792px;top:77px;width:4px"></div>
<div class="tick" style="left:792px;top:85px;width:4px"></div>
<div class="tick" style="left:790px;top:93px;width:6px"></div>
<div class="tick" style="left:792px;top:101px;width:4px"></div>
<div class="tick" style="left:792px;top:109px;width:4px"></div>
<div class="tick" style="left:788px;top:117px;width:8px"></div>
<div class="tick" style="left:792px;top:125px;width:4px"></div>
<div class="tick" style="left:792px;top:134px;width:4px"></div>
<div class="tick" style="left:790px;top:142px;width:6px"></div>
<div class="tick" style="left:792px;top:150px;width:4px"></div>
<div class="tick" style="left:792px;top:158px;width:4px"></div>
<div class="tick" style="left:790px;top:166px;width:6px"></div>
<div class="tick" style="left:792px;top:174px;width:4px"></div>
<div class="tick" style="left:792px;top:182px;width:4px"></div>
<div class="tick" style="left:790px;top:190px;width:6px"></div>
<div class="tick" style="left:792px;top:198px;width:4px"></div>
<div class="tick" style="left:792px;top:206px;width:4px"></div>
<div class="tick" style="left:790px;top:214px;width:6px"></div>
<div class="tick" style="left:792px;top:222px;width:4px"></div>
<div class="tick" style="left:792px;top:230px;width:4px"></div>
<div class="tick" style="left:790px;top:238px;width:6px"></div>
<div class="tick" style="left:792px;top:246px;width:4px"></div>
<div class="tick" style="left:792px;top:254px;width:4px"></div>
<div class="tick" style="left:790px;top:262px;width:6px"></div>
<div class="tick" style="left:792px;top:271px;width:4px"></div>
<div class="tick" style="left:792px;top:279px;width:4px"></div>
<div class="tick" style="left:790px;top:287px;width:6px"></div>
<div class="tick" style="left:792px;top:295px;width:4px"></div>
<div class="tick" style="left:792px;top:303px;width:4px"></div>
<div class="tick" style="left:790px;top:311px;width:6px"></div>
<div class="tick" style="left:792px;top:319px;width:4px"></div>
<div class="tick" style="left:792px;top:327px;width:4px"></div>
<div class="tick" style="left:790px;top:335px;width:6px"></div>
<div class="tick" style="left:792px;top:343px;width:4px"></div>
<div class="tick" style="left:792px;top:351px;width:4px"></div>
<div class="tick" style="left:790px;top:359px;width:6px"></div>
<div class="tick" style="left:792px;top:367px;width:4px"></div>
<div class="tick" style="left:792px;top:375px;width:4px"></div>
<div class="tick" style="left:790px;top:383px;width:6px"></div>
<div class="tick" style="left:792px;top:391px;width:4px"></div>
<div class="tick" style="left:792px;top:399px;width:4px"></div>
<div class="tick" style="left:790px;top:407px;width:6px"></div>
<div class="tick" style="left:792px;top:416px;width:4px"></div>
<div class="tick" style="left:792px;top:424px;width:4px"></div>
<div class="tick" style="left:790px;top:432px;width:6px"></div>
<div class="tick" style="left:792px;top:440px;width:4px"></div>
<div class="tick" style="left:792px;top:448px;width:4px"></div>
<div class="tick" style="left:790px;top:456px;width:6px"></div>
<div class="tick" style="left:792px;top:464px;width:4px"></div>
<div class="tick" style="left:792px;top:472px;width:4px"></div>
<div class="tick" style="left:790px;top:480px;width:6px"></div>
<div class="tick" style="left:792px;top:488px;width:4px"></div>
<div class="tick" style="left:792px;top:496px;width:4px"></div>
<div class="tick" style="left:790px;top:504px;width:6px"></div>
<div class="tick" style="left:792px;top:512px;width:4px"></div>
<div class="tick" style="left:792px;top:520px;width:4px"></div>
<div class="tick" style="left:790px;top:528px;width:6px"></div>
<div class="tick" style="left:792px;top:536px;width:4px"></div>
<div class="tick" style="left:792px;top:544px;width:4px"></div>
<div class="tick" style="left:790px;top:553px;width:6px"></div>
<div class="tick" style="left:792px;top:561px;width:4px"></div>
<div class="tick" style="left:792px;top:569px;width:4px"></div>
<div class="tick" style="left:790px;top:577px;width:6px"></div>
<div class="tick" style="left:792px;top:585px;width:4px"></div>
<div class="tick" style="left:792px;top:593px;width:4px"></div>
<div class="tick" style="left:788px;top:601px;width:8px"></div>
<svg class="a" style="left:836px;top:604px" width="21" height="21"><path d="M0 21L21 0V21Z" fill="#5e583c"/><path d="M3 20.5L20.5 3M9 20.5L20.5 9M15 20.5L20.5 15" stroke="#efe9cf" stroke-width="1.8"/></svg>
<svg class="a" style="left:0;top:0" width="857" height="625" font-family="Liberation Sans">
<text x="12.36" y="19.20" font-size="14.00" font-weight="normal" fill="#15140f" textLength="6.54" lengthAdjust="spacingAndGlyphs" stroke="#15140f" stroke-width="0.2">?</text>
<text x="34.68" y="18.60" font-size="13.71" font-weight="normal" fill="#15140f" textLength="43.41" lengthAdjust="spacingAndGlyphs" stroke="#15140f" stroke-width="0.2">Presets</text>
<text x="159.02" y="19.60" font-size="16.29" font-weight="bold" fill="#15140f" textLength="7.79" lengthAdjust="spacingAndGlyphs">A</text>
<text x="176.02" y="19.60" font-size="16.29" font-weight="bold" fill="#15140f" textLength="7.29" lengthAdjust="spacingAndGlyphs">B</text>
<text x="193.02" y="19.60" font-size="16.29" font-weight="bold" fill="#15140f" textLength="7.79" lengthAdjust="spacingAndGlyphs">A</text>
<text x="211.02" y="19.60" font-size="16.29" font-weight="bold" fill="#15140f" textLength="6.79" lengthAdjust="spacingAndGlyphs">B</text>
<text x="230.89" y="18.70" font-size="13.43" font-weight="normal" fill="#15140f" textLength="43.68" lengthAdjust="spacingAndGlyphs" stroke="#15140f" stroke-width="0.2">Routing</text>
<text x="310.10" y="19.50" font-size="16.71" font-weight="bold" fill="#15140f" textLength="35.54" lengthAdjust="spacingAndGlyphs">STEREO</text>
<text x="357.50" y="19.50" font-size="16.71" font-weight="bold" fill="#15140f" textLength="25.04" lengthAdjust="spacingAndGlyphs">SOLO</text>
<text x="393.20" y="18.60" font-size="13.29" font-weight="normal" fill="#15140f" textLength="30.36" lengthAdjust="spacingAndGlyphs" stroke="#15140f" stroke-width="0.2">Copy</text>
<text x="587.02" y="19.70" font-size="16.29" font-weight="normal" fill="#1e1d18" textLength="81.79" lengthAdjust="spacingAndGlyphs" stroke="#1e1d18" stroke-width="0.2">SPAN Plus</text>
<text x="796.00" y="19.60" font-size="16.71" font-weight="bold" fill="#15140f" textLength="25.74" lengthAdjust="spacingAndGlyphs">WIDE</text>
<text x="11.71" y="50.40" font-size="14.86" font-weight="normal" fill="#2d2c24" textLength="64.03" lengthAdjust="spacingAndGlyphs" stroke="#2d2c24" stroke-width="0.2">Spectrum</text>
<text x="94.77" y="52.90" font-size="15.43" font-weight="bold" fill="#15140f" textLength="25.00" lengthAdjust="spacingAndGlyphs">HOLD</text>
<text x="166.08" y="53.70" font-size="15.29" font-weight="normal" fill="#34332a" textLength="59.18" lengthAdjust="spacingAndGlyphs" stroke="#34332a" stroke-width="0.2">Underlay</text>
<text x="333.99" y="52.20" font-size="13.43" font-weight="normal" fill="#15140f" textLength="59.68" lengthAdjust="spacingAndGlyphs" stroke="#15140f" stroke-width="0.2">Save PNG</text>
<text x="407.49" y="52.20" font-size="13.43" font-weight="normal" fill="#15140f" textLength="32.08" lengthAdjust="spacingAndGlyphs" stroke="#15140f" stroke-width="0.2">Static</text>
<text x="465.39" y="52.20" font-size="13.43" font-weight="normal" fill="#15140f" textLength="37.18" lengthAdjust="spacingAndGlyphs" stroke="#15140f" stroke-width="0.2">Import</text>
<text x="527.88" y="53.30" font-size="14.57" font-weight="normal" fill="#34332a" textLength="62.55" lengthAdjust="spacingAndGlyphs" stroke="#34332a" stroke-width="0.2">Export To</text>
<text x="627.13" y="53.30" font-size="14.57" font-weight="normal" fill="#34332a" textLength="38.60" lengthAdjust="spacingAndGlyphs" stroke="#34332a" stroke-width="0.2">Mode</text>
<text x="688.54" y="53.20" font-size="16.00" font-weight="bold" fill="#15140f" textLength="25.96" lengthAdjust="spacingAndGlyphs">USER</text>
<text x="769.61" y="50.40" font-size="14.86" font-weight="normal" fill="#2d2c24" textLength="25.13" lengthAdjust="spacingAndGlyphs" stroke="#2d2c24" stroke-width="0.2">Out</text>
<text x="11.22" y="568.50" font-size="14.71" font-weight="normal" fill="#2d2c24" textLength="59.02" lengthAdjust="spacingAndGlyphs" stroke="#2d2c24" stroke-width="0.2">Statistics</text>
<text x="87.80" y="571.50" font-size="15.00" font-weight="normal" fill="#2d2c24" textLength="30.75" lengthAdjust="spacingAndGlyphs" stroke="#2d2c24" stroke-width="0.2">RMS</text>
<text x="128.10" y="571.50" font-size="15.00" font-weight="normal" fill="#15140f" textLength="23.85" lengthAdjust="spacingAndGlyphs" stroke="#15140f" stroke-width="0.45">-18.6</text>
<text x="158.50" y="571.50" font-size="15.00" font-weight="normal" fill="#15140f" textLength="23.15" lengthAdjust="spacingAndGlyphs" stroke="#15140f" stroke-width="0.45">-18.7</text>
<text x="40.60" y="595.30" font-size="15.00" font-weight="normal" fill="#2d2c24" textLength="111.85" lengthAdjust="spacingAndGlyphs" stroke="#2d2c24" stroke-width="0.2">Max Crest Factor</text>
<text x="73.84" y="613.50" font-size="14.29" font-weight="normal" fill="#15140f" textLength="16.27" lengthAdjust="spacingAndGlyphs" stroke="#15140f" stroke-width="0.45">4.5</text>
<text x="103.64" y="613.50" font-size="14.29" font-weight="normal" fill="#15140f" textLength="16.57" lengthAdjust="spacingAndGlyphs" stroke="#15140f" stroke-width="0.45">3.5</text>
<text x="215.90" y="595.20" font-size="15.00" font-weight="normal" fill="#2d2c24" textLength="133.05" lengthAdjust="spacingAndGlyphs" stroke="#2d2c24" stroke-width="0.2">True Peak Clippings</text>
<text x="264.04" y="613.10" font-size="14.29" font-weight="normal" fill="#15140f" textLength="6.67" lengthAdjust="spacingAndGlyphs" stroke="#15140f" stroke-width="0.45">0</text>
<text x="293.64" y="613.10" font-size="14.29" font-weight="normal" fill="#15140f" textLength="7.87" lengthAdjust="spacingAndGlyphs" stroke="#15140f" stroke-width="0.45">0</text>
<text x="375.86" y="570.70" font-size="14.00" font-weight="normal" fill="#15140f" textLength="32.64" lengthAdjust="spacingAndGlyphs" stroke="#15140f" stroke-width="0.2">Reset</text>
<text x="419.90" y="572.00" font-size="15.00" font-weight="normal" fill="#2d2c24" textLength="57.95" lengthAdjust="spacingAndGlyphs" stroke="#2d2c24" stroke-width="0.2">Metering</text>
<text x="492.60" y="571.50" font-size="15.00" font-weight="bold" fill="#15140f" textLength="25.75" lengthAdjust="spacingAndGlyphs">DBFS</text>
<text x="538.00" y="571.50" font-size="15.00" font-weight="bold" fill="#15140f" textLength="12.15" lengthAdjust="spacingAndGlyphs">TP</text>
<text x="435.10" y="595.20" font-size="15.00" font-weight="normal" fill="#2d2c24" textLength="65.85" lengthAdjust="spacingAndGlyphs" stroke="#2d2c24" stroke-width="0.2">True Peak</text>
<text x="442.44" y="613.00" font-size="14.29" font-weight="normal" fill="#15140f" textLength="19.97" lengthAdjust="spacingAndGlyphs" stroke="#15140f" stroke-width="0.45">-4.8</text>
<text x="472.34" y="613.00" font-size="14.29" font-weight="normal" fill="#15140f" textLength="20.67" lengthAdjust="spacingAndGlyphs" stroke="#15140f" stroke-width="0.45">-6.8</text>
<text x="568.32" y="568.80" font-size="14.71" font-weight="normal" fill="#2d2c24" textLength="111.92" lengthAdjust="spacingAndGlyphs" stroke="#2d2c24" stroke-width="0.2">Correlation Meter</text>
<text x="700.57" y="571.20" font-size="15.43" font-weight="normal" fill="#15140f" textLength="17.40" lengthAdjust="spacingAndGlyphs" stroke="#15140f" stroke-width="0.45">BAL</text>
<text x="728.57" y="571.20" font-size="15.43" font-weight="normal" fill="#15140f" textLength="18.20" lengthAdjust="spacingAndGlyphs" stroke="#15140f" stroke-width="0.45">-0.1</text>
<text x="569.36" y="612.40" font-size="14.00" font-weight="normal" fill="#2d2c24" textLength="19.34" lengthAdjust="spacingAndGlyphs" stroke="#2d2c24" stroke-width="0.2">-1.00</text>
<text x="609.26" y="612.40" font-size="14.00" font-weight="normal" fill="#2d2c24" textLength="21.14" lengthAdjust="spacingAndGlyphs" stroke="#2d2c24" stroke-width="0.2">-0.50</text>
<text x="652.16" y="612.40" font-size="14.00" font-weight="normal" fill="#2d2c24" textLength="18.74" lengthAdjust="spacingAndGlyphs" stroke="#2d2c24" stroke-width="0.2">0.00</text>
<text x="692.56" y="612.40" font-size="14.00" font-weight="normal" fill="#2d2c24" textLength="18.04" lengthAdjust="spacingAndGlyphs" stroke="#2d2c24" stroke-width="0.2">0.50</text>
<text x="734.96" y="612.40" font-size="14.00" font-weight="normal" fill="#2d2c24" textLength="16.74" lengthAdjust="spacingAndGlyphs" stroke="#2d2c24" stroke-width="0.2">1.00</text>
<text x="610.85" y="86.90" font-size="15.86" font-weight="normal" fill="#4a7ed8" textLength="88.24" lengthAdjust="spacingAndGlyphs" stroke="#4a7ed8" stroke-width="0.35">1: DRUMS (STEREO)</text>
<text x="611.05" y="105.00" font-size="15.86" font-weight="normal" fill="#e080b0" textLength="85.14" lengthAdjust="spacingAndGlyphs" stroke="#e080b0" stroke-width="0.35">2: PIANO (STEREO)</text>
<text x="611.05" y="123.00" font-size="15.86" font-weight="normal" fill="#e89a48" textLength="89.74" lengthAdjust="spacingAndGlyphs" stroke="#e89a48" stroke-width="0.35">3: GUITAR (STEREO)</text>
<text x="255.73" y="50.50" font-size="12.86" font-weight="normal" fill="#15140f" textLength="13.41" lengthAdjust="spacingAndGlyphs" stroke="#15140f" stroke-width="0.2">---</text>
<text x="600.73" y="50.50" font-size="12.86" font-weight="normal" fill="#15140f" textLength="13.41" lengthAdjust="spacingAndGlyphs" stroke="#15140f" stroke-width="0.2">---</text>
<path d="M203.7 11.2L208.6 14.25L203.7 17.3Z" fill="#15140f"/>
<text transform="translate(731.8 73.50) scale(.68 1)" text-anchor="end" font-size="12.8" font-weight="bold" fill="#2b2a22">-18</text>
<text transform="translate(731.8 97.41) scale(.68 1)" text-anchor="end" font-size="12.8" font-weight="bold" fill="#2b2a22">-21</text>
<text transform="translate(731.8 121.32) scale(.68 1)" text-anchor="end" font-size="12.8" font-weight="bold" fill="#2b2a22">-24</text>
<text transform="translate(731.8 145.23) scale(.68 1)" text-anchor="end" font-size="12.8" font-weight="bold" fill="#2b2a22">-27</text>
<text transform="translate(731.8 169.14) scale(.68 1)" text-anchor="end" font-size="12.8" font-weight="bold" fill="#2b2a22">-30</text>
<text transform="translate(731.8 193.05) scale(.68 1)" text-anchor="end" font-size="12.8" font-weight="bold" fill="#2b2a22">-33</text>
<text transform="translate(731.8 216.96) scale(.68 1)" text-anchor="end" font-size="12.8" font-weight="bold" fill="#2b2a22">-36</text>
<text transform="translate(731.8 240.87) scale(.68 1)" text-anchor="end" font-size="12.8" font-weight="bold" fill="#2b2a22">-39</text>
<text transform="translate(731.8 264.78) scale(.68 1)" text-anchor="end" font-size="12.8" font-weight="bold" fill="#2b2a22">-42</text>
<text transform="translate(731.8 288.69) scale(.68 1)" text-anchor="end" font-size="12.8" font-weight="bold" fill="#2b2a22">-45</text>
<text transform="translate(731.8 312.60) scale(.68 1)" text-anchor="end" font-size="12.8" font-weight="bold" fill="#2b2a22">-48</text>
<text transform="translate(731.8 336.51) scale(.68 1)" text-anchor="end" font-size="12.8" font-weight="bold" fill="#2b2a22">-51</text>
<text transform="translate(731.8 360.42) scale(.68 1)" text-anchor="end" font-size="12.8" font-weight="bold" fill="#2b2a22">-54</text>
<text transform="translate(731.8 384.33) scale(.68 1)" text-anchor="end" font-size="12.8" font-weight="bold" fill="#2b2a22">-57</text>
<text transform="translate(731.8 408.24) scale(.68 1)" text-anchor="end" font-size="12.8" font-weight="bold" fill="#2b2a22">-60</text>
<text transform="translate(731.8 432.15) scale(.68 1)" text-anchor="end" font-size="12.8" font-weight="bold" fill="#2b2a22">-63</text>
<text transform="translate(731.8 456.06) scale(.68 1)" text-anchor="end" font-size="12.8" font-weight="bold" fill="#2b2a22">-66</text>
<text transform="translate(731.8 479.97) scale(.68 1)" text-anchor="end" font-size="12.8" font-weight="bold" fill="#2b2a22">-69</text>
<text transform="translate(731.8 503.88) scale(.68 1)" text-anchor="end" font-size="12.8" font-weight="bold" fill="#2b2a22">-72</text>
<text transform="translate(18.40 520.4) scale(.72 1)" text-anchor="middle" font-size="11.8" font-weight="bold" fill="#2b2a22">20</text>
<text transform="translate(58.72 520.4) scale(.72 1)" text-anchor="middle" font-size="11.8" font-weight="bold" fill="#2b2a22">30</text>
<text transform="translate(87.34 520.4) scale(.72 1)" text-anchor="middle" font-size="11.8" font-weight="bold" fill="#2b2a22">40</text>
<text transform="translate(127.66 520.4) scale(.72 1)" text-anchor="middle" font-size="11.8" font-weight="bold" fill="#2b2a22">60</text>
<text transform="translate(156.27 520.4) scale(.72 1)" text-anchor="middle" font-size="11.8" font-weight="bold" fill="#2b2a22">80</text>
<text transform="translate(178.46 520.4) scale(.72 1)" text-anchor="middle" font-size="11.8" font-weight="bold" fill="#2b2a22">100</text>
<text transform="translate(247.40 520.4) scale(.72 1)" text-anchor="middle" font-size="11.8" font-weight="bold" fill="#2b2a22">200</text>
<text transform="translate(287.72 520.4) scale(.72 1)" text-anchor="middle" font-size="11.8" font-weight="bold" fill="#2b2a22">300</text>
<text transform="translate(316.34 520.4) scale(.72 1)" text-anchor="middle" font-size="11.8" font-weight="bold" fill="#2b2a22">400</text>
<text transform="translate(356.66 520.4) scale(.72 1)" text-anchor="middle" font-size="11.8" font-weight="bold" fill="#2b2a22">600</text>
<text transform="translate(385.27 520.4) scale(.72 1)" text-anchor="middle" font-size="11.8" font-weight="bold" fill="#2b2a22">800</text>
<text transform="translate(407.46 520.4) scale(.72 1)" text-anchor="middle" font-size="11.8" font-weight="bold" fill="#2b2a22">1K</text>
<text transform="translate(476.40 520.4) scale(.72 1)" text-anchor="middle" font-size="11.8" font-weight="bold" fill="#2b2a22">2K</text>
<text transform="translate(516.72 520.4) scale(.72 1)" text-anchor="middle" font-size="11.8" font-weight="bold" fill="#2b2a22">3K</text>
<text transform="translate(545.34 520.4) scale(.72 1)" text-anchor="middle" font-size="11.8" font-weight="bold" fill="#2b2a22">4K</text>
<text transform="translate(585.66 520.4) scale(.72 1)" text-anchor="middle" font-size="11.8" font-weight="bold" fill="#2b2a22">6K</text>
<text transform="translate(614.27 520.4) scale(.72 1)" text-anchor="middle" font-size="11.8" font-weight="bold" fill="#2b2a22">8K</text>
<text transform="translate(636.46 520.4) scale(.72 1)" text-anchor="middle" font-size="11.8" font-weight="bold" fill="#2b2a22">10K</text>
<text transform="translate(705.40 520.4) scale(.72 1)" text-anchor="middle" font-size="11.8" font-weight="bold" fill="#2b2a22">20K</text>
<text transform="translate(784.3 74.40) scale(.66 1)" text-anchor="end" font-size="13.2" font-weight="bold" fill="#2b2a22">6</text>
<text transform="translate(784.3 98.57) scale(.66 1)" text-anchor="end" font-size="13.2" font-weight="bold" fill="#2b2a22">3</text>
<text transform="translate(784.3 122.74) scale(.66 1)" text-anchor="end" font-size="13.2" font-weight="bold" fill="#2b2a22">0</text>
<text transform="translate(784.3 146.91) scale(.66 1)" text-anchor="end" font-size="13.2" font-weight="bold" fill="#2b2a22">-3</text>
<text transform="translate(784.3 171.08) scale(.66 1)" text-anchor="end" font-size="13.2" font-weight="bold" fill="#2b2a22">-6</text>
<text transform="translate(784.3 195.25) scale(.66 1)" text-anchor="end" font-size="13.2" font-weight="bold" fill="#2b2a22">-9</text>
<text transform="translate(784.3 219.43) scale(.66 1)" text-anchor="end" font-size="13.2" font-weight="bold" fill="#2b2a22">-12</text>
<text transform="translate(784.3 243.60) scale(.66 1)" text-anchor="end" font-size="13.2" font-weight="bold" fill="#2b2a22">-15</text>
<text transform="translate(784.3 267.77) scale(.66 1)" text-anchor="end" font-size="13.2" font-weight="bold" fill="#2b2a22">-18</text>
<text transform="translate(784.3 291.94) scale(.66 1)" text-anchor="end" font-size="13.2" font-weight="bold" fill="#2b2a22">-21</text>
<text transform="translate(784.3 316.11) scale(.66 1)" text-anchor="end" font-size="13.2" font-weight="bold" fill="#2b2a22">-24</text>
<text transform="translate(784.3 340.28) scale(.66 1)" text-anchor="end" font-size="13.2" font-weight="bold" fill="#2b2a22">-27</text>
<text transform="translate(784.3 364.45) scale(.66 1)" text-anchor="end" font-size="13.2" font-weight="bold" fill="#2b2a22">-30</text>
<text transform="translate(784.3 388.62) scale(.66 1)" text-anchor="end" font-size="13.2" font-weight="bold" fill="#2b2a22">-33</text>
<text transform="translate(784.3 412.79) scale(.66 1)" text-anchor="end" font-size="13.2" font-weight="bold" fill="#2b2a22">-36</text>
<text transform="translate(784.3 436.96) scale(.66 1)" text-anchor="end" font-size="13.2" font-weight="bold" fill="#2b2a22">-39</text>
<text transform="translate(784.3 461.14) scale(.66 1)" text-anchor="end" font-size="13.2" font-weight="bold" fill="#2b2a22">-42</text>
<text transform="translate(784.3 485.31) scale(.66 1)" text-anchor="end" font-size="13.2" font-weight="bold" fill="#2b2a22">-45</text>
<text transform="translate(784.3 509.48) scale(.66 1)" text-anchor="end" font-size="13.2" font-weight="bold" fill="#2b2a22">-48</text>
<text transform="translate(784.3 533.65) scale(.66 1)" text-anchor="end" font-size="13.2" font-weight="bold" fill="#2b2a22">-51</text>
<text transform="translate(784.3 557.82) scale(.66 1)" text-anchor="end" font-size="13.2" font-weight="bold" fill="#2b2a22">-54</text>
<text transform="translate(784.3 581.99) scale(.66 1)" text-anchor="end" font-size="13.2" font-weight="bold" fill="#2b2a22">-57</text>
<text transform="translate(784.3 606.16) scale(.66 1)" text-anchor="end" font-size="13.2" font-weight="bold" fill="#2b2a22">-60</text>
<text transform="translate(809.5 615) scale(.6 1)" text-anchor="middle" font-size="12.5" font-weight="normal" stroke="#2b2a22" stroke-width="0.4" fill="#2b2a22">L</text>
<text transform="translate(831.8 615) scale(.6 1)" text-anchor="middle" font-size="12.5" font-weight="normal" stroke="#2b2a22" stroke-width="0.4" fill="#2b2a22">R</text>
</svg>
</body></html>
